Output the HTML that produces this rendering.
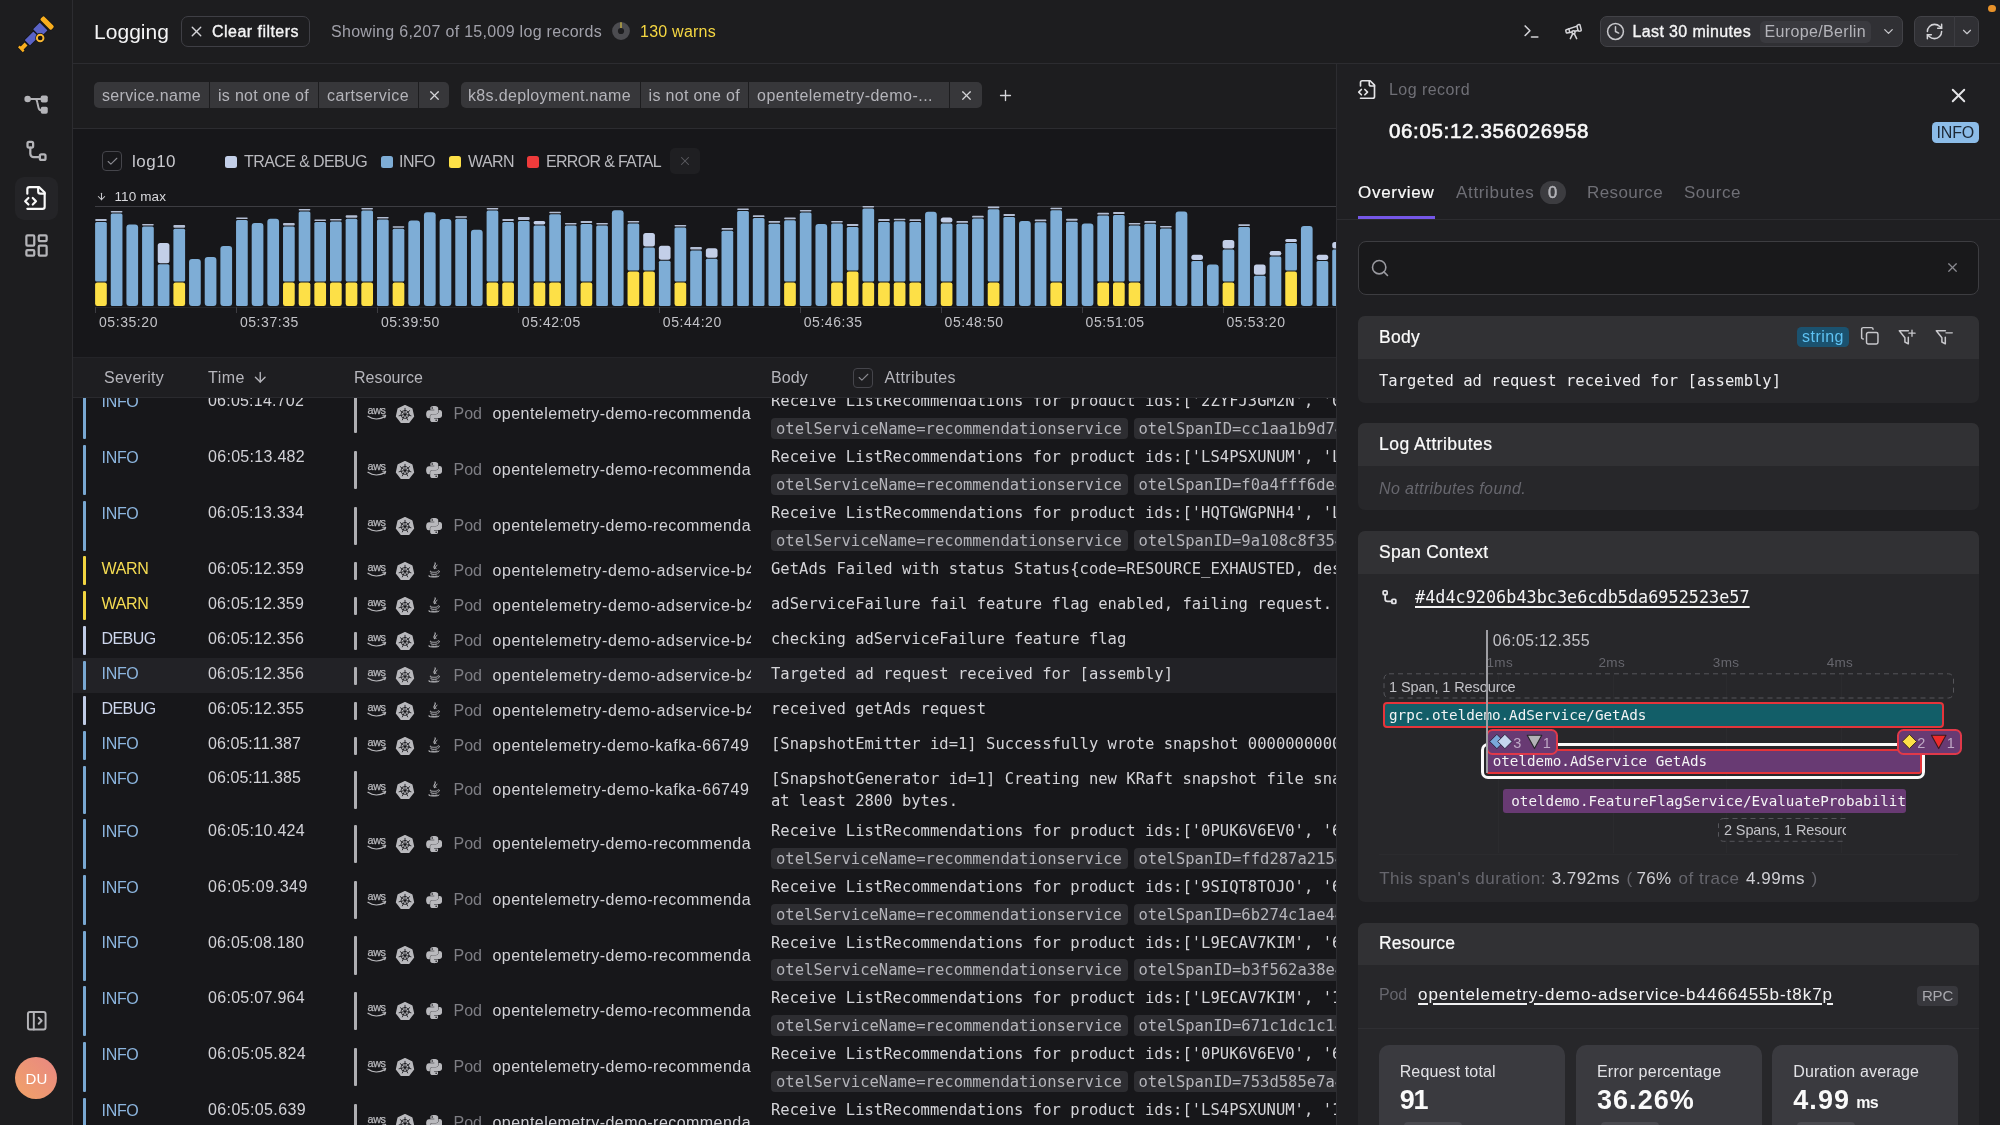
<!DOCTYPE html><html lang="en"><head><meta charset="utf-8"><title>Logging</title><style>

*{box-sizing:border-box;margin:0;padding:0}
html,body{width:2000px;height:1125px;overflow:hidden;background:#17171a}
body{font-family:"Liberation Sans",sans-serif;position:relative;-webkit-font-smoothing:antialiased}
#app{position:absolute;left:0;top:0;width:2000px;height:1125px;overflow:hidden;will-change:transform}
.b{position:absolute;display:block}
.t{position:absolute;white-space:pre}
.clip{position:absolute;overflow:hidden}

</style></head><body><div id="app">
<div class="b" style="left:72.0px;top:0.0px;width:1928.0px;height:64.0px;background:#1d1d1f;border-bottom:1px solid #2c2c30;"></div>
<div class="b" style="left:72.0px;top:64.0px;width:1264.0px;height:64.5px;background:#1d1d1f;border-bottom:1px solid #2c2c30;"></div>
<div class="b" style="left:0.0px;top:0.0px;width:73.0px;height:1125.0px;background:#1d1d1f;border-right:1px solid #2c2c30;"></div>
<svg class="b" style="left:0;top:0" width="72" height="62" viewBox="0 0 72 62"><g transform="translate(40.400 29.750) rotate(-45)" stroke="#131316" stroke-width="1.300" paint-order="stroke" stroke-linejoin="round"><rect x="6.900" y="-7.700" width="5.200" height="15.400" rx="1.600" fill="#f9ae1e"/><rect x="-4.800" y="-5.500" width="9.400" height="11" rx=".6" fill="#5a63c6"/><rect x="-18.500" y="-3.750" width="12.300" height="7.500" rx=".6" fill="#5a63c6"/><path d="M-28.300 -3.400h2.500v1.400h5.600v4h-5.600v1.400h-2.500z" fill="#f9ae1e"/></g><circle cx="40.200" cy="38" r="4.900" fill="#131316"/><circle cx="40.200" cy="38" r="3.300" fill="#1a1410" stroke="#f7b733" stroke-width="1.900"/></svg>
<svg class="b" style="left:21.5px;top:88.6px" width="30" height="30" viewBox="0 0 24 24" stroke="#b4b4b8" stroke-width="1.6" stroke-linecap="round" stroke-linejoin="round" fill="none"><circle cx="4.500" cy="8" r="2.600" fill="#b4b4b8" stroke="none"/><rect x="15" y="5.200" width="5.600" height="5.600" rx="1.400" fill="#b4b4b8" stroke="none"/><rect x="15" y="14.200" width="5.600" height="5.600" rx="1.400" fill="#b4b4b8" stroke="none"/><path d="M7 8h8"/><path d="M10.500 8c1 0 1.400 1 1.700 2.500l.9 4c.3 1.500 1 2.500 2 2.500"/></svg>
<svg class="b" style="left:22.5px;top:137.5px" width="27" height="27" viewBox="0 0 24 24" stroke="#b4b4b8" stroke-width="2" stroke-linecap="round" stroke-linejoin="round" fill="none"><rect x="4" y="3.500" width="5" height="5" rx="1.300"/><path d="M6.500 8.500v5.500a3 3 0 0 0 3 3h5.500"/><rect x="15" y="14.500" width="5" height="5" rx="1.300"/></svg>
<div class="b" style="left:15.0px;top:177.0px;width:43.0px;height:43.0px;background:#242427;border-radius:9px;"></div>
<svg class="b" style="left:23.0px;top:185.0px" width="26" height="26" viewBox="0 0 24 24" stroke="#fafafa" stroke-width="2" stroke-linecap="round" stroke-linejoin="round" fill="none"><path d="M4 22h14a2 2 0 0 0 2-2V7l-5-5H6a2 2 0 0 0-2 2v4"/><path d="M14 2v4a2 2 0 0 0 2 2h4"/><path d="m5 12-3 3 3 3"/><path d="m9 18 3-3-3-3"/></svg>
<svg class="b" style="left:22.5px;top:231.5px" width="27" height="27" viewBox="0 0 24 24" stroke="#b4b4b8" stroke-width="2" stroke-linecap="round" stroke-linejoin="round" fill="none"><rect width="7" height="9" x="3" y="3" rx="1"/><rect width="7" height="5" x="14" y="3" rx="1"/><rect width="7" height="9" x="14" y="12" rx="1"/><rect width="7" height="5" x="3" y="16" rx="1"/></svg>
<svg class="b" style="left:24.5px;top:1009.0px" width="23.5" height="23.5" viewBox="0 0 24 24" stroke="#b4b4b8" stroke-width="2" stroke-linecap="round" stroke-linejoin="round" fill="none"><rect width="18" height="18" x="3" y="3" rx="2"/><path d="M9 3v18"/><path d="m14 9 3 3-3 3"/></svg>
<div class="b" style="left:15.0px;top:1057.0px;width:42.0px;height:42.0px;border-radius:50%;background:linear-gradient(45deg,#f0a06a 10%,#e98a80 90%);"></div>
<div class="t " style="left:25.5px;top:1068.0px;font-size:15.00px;line-height:21px;color:#fff;letter-spacing:0.167px;">DU</div>
<div class="t " style="left:94.0px;top:16.5px;font-size:21.00px;line-height:29px;color:#f4f4f5;letter-spacing:0.037px;">Logging</div>
<div class="b" style="left:181.0px;top:16.0px;width:129.0px;height:31.0px;border:1px solid #3f3f45;border-radius:7px;"></div>
<svg class="b" style="left:187.5px;top:23.0px" width="17" height="17" viewBox="0 0 24 24" stroke="#d4d4d8" stroke-width="1.9" stroke-linecap="round" stroke-linejoin="round" fill="none"><path d="M18 6 6 18"/><path d="m6 6 12 12"/></svg>
<div class="t " style="left:212.0px;top:20.5px;font-size:16.00px;line-height:22px;color:#f4f4f5;letter-spacing:0.469px;-webkit-text-stroke:0.35px #f4f4f5;">Clear filters</div>
<div class="t " style="left:331.0px;top:20.5px;font-size:16.00px;line-height:22px;color:#a1a1aa;letter-spacing:0.296px;">Showing 6,207 of 15,009 log records</div>
<svg class="b" style="left:611px;top:21px" width="20" height="20" viewBox="0 0 20 20"><circle cx="10" cy="10" r="6" fill="none" stroke="#4c4c50" stroke-width="5.800"/><path d="M10 1.200v5.800" fill="none" stroke="#d8c040" stroke-width="1.200"/></svg>
<div class="t " style="left:640.0px;top:20.5px;font-size:16.00px;line-height:22px;color:#f5d742;letter-spacing:0.242px;">130 warns</div>
<svg class="b" style="left:1522.0px;top:22.0px" width="19" height="19" viewBox="0 0 24 24" stroke="#d4d4d8" stroke-width="2" stroke-linecap="round" stroke-linejoin="round" fill="none"><polyline points="4 17 10 11 4 5"/><line x1="12" x2="20" y1="19" y2="19"/></svg>
<svg class="b" style="left:1564.0px;top:22.0px" width="19" height="19" viewBox="0 0 24 24" stroke="#d4d4d8" stroke-width="1.9" stroke-linecap="round" stroke-linejoin="round" fill="none"><path d="m10.065 12.493-6.180 1.318a.934.934 0 0 1-1.108-.702l-.537-2.150a1.070 1.070 0 0 1 .691-1.265l13.504-4.440"/><path d="m13.560 11.747 4.332-.924"/><path d="m16 21-3.105-6.210"/><path d="M16.485 5.940a2 2 0 0 1 1.455-2.425l1.090-.272a1 1 0 0 1 1.212.727l1.515 6.060a1 1 0 0 1-.727 1.213l-1.090.272a2 2 0 0 1-2.425-1.455z"/><path d="m6.158 8.633 1.114 4.456"/><path d="m8 21 3.105-6.210"/><circle cx="12" cy="13" r="2"/></svg>
<div class="b" style="left:1600.0px;top:15.5px;width:303.0px;height:31.0px;background:#303034;border:1px solid #424247;border-radius:7px;"></div>
<svg class="b" style="left:1605.5px;top:22.0px" width="19" height="19" viewBox="0 0 24 24" stroke="#c8c8cc" stroke-width="1.9" stroke-linecap="round" stroke-linejoin="round" fill="none"><circle cx="12" cy="12" r="10"/><polyline points="12 6 12 12 16 14"/></svg>
<div class="t " style="left:1632.5px;top:20.5px;font-size:16.00px;line-height:22px;color:#f4f4f5;letter-spacing:0.370px;-webkit-text-stroke:0.35px #f4f4f5;">Last 30 minutes</div>
<div class="b" style="left:1760.0px;top:21.0px;width:111.0px;height:22.0px;background:#3a3a3f;border-radius:5px;"></div>
<div class="t " style="left:1764.5px;top:20.5px;font-size:16.00px;line-height:22px;color:#b4b4ba;letter-spacing:0.350px;">Europe/Berlin</div>
<svg class="b" style="left:1880.5px;top:24.0px" width="15" height="15" viewBox="0 0 24 24" stroke="#c8c8cc" stroke-width="2" stroke-linecap="round" stroke-linejoin="round" fill="none"><path d="m6 9 6 6 6-6"/></svg>
<div class="b" style="left:1914.0px;top:15.5px;width:65.0px;height:31.0px;background:#303034;border:1px solid #424247;border-radius:7px;"></div>
<div class="b" style="left:1954.0px;top:16.0px;width:1.0px;height:30.0px;background:#3c3c41;"></div>
<svg class="b" style="left:1925.0px;top:22.0px" width="19" height="19" viewBox="0 0 24 24" stroke="#d4d4d8" stroke-width="1.9" stroke-linecap="round" stroke-linejoin="round" fill="none"><path d="M3 12a9 9 0 0 1 9-9 9.750 9.750 0 0 1 6.740 2.740L21 8"/><path d="M21 3v5h-5"/><path d="M21 12a9 9 0 0 1-9 9 9.750 9.750 0 0 1-6.740-2.740L3 16"/><path d="M8 16H3v5"/></svg>
<svg class="b" style="left:1959.5px;top:24.5px" width="14" height="14" viewBox="0 0 24 24" stroke="#c8c8cc" stroke-width="2" stroke-linecap="round" stroke-linejoin="round" fill="none"><path d="m6 9 6 6 6-6"/></svg>
<div class="b" style="left:1988.0px;top:4.5px;width:7.5px;height:7.5px;background:#e8922a;border-radius:50%;"></div>
<div class="b" style="left:94.0px;top:82.0px;width:355.0px;height:26.0px;background:#37373a;border-radius:5px;"></div>
<div class="b" style="left:208.5px;top:82.0px;width:1.5px;height:26.0px;background:#1d1d1f;"></div>
<div class="b" style="left:317.5px;top:82.0px;width:1.5px;height:26.0px;background:#1d1d1f;"></div>
<div class="b" style="left:417.5px;top:82.0px;width:1.5px;height:26.0px;background:#1d1d1f;"></div>
<div class="t " style="left:102.0px;top:84.5px;font-size:16.00px;line-height:22px;color:#b4b4ba;letter-spacing:0.321px;">service.name</div>
<div class="t " style="left:218.0px;top:84.5px;font-size:16.00px;line-height:22px;color:#b4b4ba;letter-spacing:0.294px;">is not one of</div>
<div class="t " style="left:327.0px;top:84.5px;font-size:16.00px;line-height:22px;color:#b4b4ba;letter-spacing:0.423px;">cartservice</div>
<svg class="b" style="left:426.5px;top:88.0px" width="15" height="15" viewBox="0 0 24 24" stroke="#d4d4d8" stroke-width="2" stroke-linecap="round" stroke-linejoin="round" fill="none"><path d="M18 6 6 18"/><path d="m6 6 12 12"/></svg>
<div class="b" style="left:460.5px;top:82.0px;width:521.0px;height:26.0px;background:#37373a;border-radius:5px;"></div>
<div class="b" style="left:639.5px;top:82.0px;width:1.5px;height:26.0px;background:#1d1d1f;"></div>
<div class="b" style="left:747.5px;top:82.0px;width:1.5px;height:26.0px;background:#1d1d1f;"></div>
<div class="b" style="left:948.5px;top:82.0px;width:1.5px;height:26.0px;background:#1d1d1f;"></div>
<div class="t " style="left:468.0px;top:84.5px;font-size:16.00px;line-height:22px;color:#b4b4ba;letter-spacing:0.340px;">k8s.deployment.name</div>
<div class="t " style="left:648.5px;top:84.5px;font-size:16.00px;line-height:22px;color:#b4b4ba;letter-spacing:0.333px;">is not one of</div>
<div class="t " style="left:757.0px;top:84.5px;font-size:16.00px;line-height:22px;color:#b4b4ba;letter-spacing:0.481px;">opentelemetry-demo-...</div>
<svg class="b" style="left:958.5px;top:88.0px" width="15" height="15" viewBox="0 0 24 24" stroke="#d4d4d8" stroke-width="2" stroke-linecap="round" stroke-linejoin="round" fill="none"><path d="M18 6 6 18"/><path d="m6 6 12 12"/></svg>
<svg class="b" style="left:997.0px;top:87.0px" width="17" height="17" viewBox="0 0 24 24" stroke="#d4d4d8" stroke-width="1.9" stroke-linecap="round" stroke-linejoin="round" fill="none"><path d="M5 12h14"/><path d="M12 5v14"/></svg>
<div class="b" style="left:102.0px;top:151.0px;width:20.0px;height:20.0px;border:1px solid #45454b;border-radius:4px;"></div>
<svg class="b" style="left:105.5px;top:154.5px" width="13" height="13" viewBox="0 0 24 24" stroke="#8a8a90" stroke-width="2" stroke-linecap="round" stroke-linejoin="round" fill="none"><path d="M20 6 9 17l-5-5"/></svg>
<div class="t " style="left:132.0px;top:149.5px;font-size:17.00px;line-height:23px;color:#c9c9ce;letter-spacing:0.481px;">log10</div>
<div class="b" style="left:225.0px;top:155.5px;width:12.0px;height:12.0px;background:#c3cfe8;border-radius:2.5px;"></div>
<div class="t " style="left:244.0px;top:150.5px;font-size:16.00px;line-height:22px;color:#b9b9be;letter-spacing:-0.591px;">TRACE &amp; DEBUG</div>
<div class="b" style="left:381.0px;top:155.5px;width:12.0px;height:12.0px;background:#7eadd6;border-radius:2.5px;"></div>
<div class="t " style="left:399.0px;top:150.5px;font-size:16.00px;line-height:22px;color:#b9b9be;letter-spacing:-0.555px;">INFO</div>
<div class="b" style="left:449.0px;top:155.5px;width:12.0px;height:12.0px;background:#fde047;border-radius:2.5px;"></div>
<div class="t " style="left:468.0px;top:150.5px;font-size:16.00px;line-height:22px;color:#b9b9be;letter-spacing:-0.572px;">WARN</div>
<div class="b" style="left:527.0px;top:155.5px;width:12.0px;height:12.0px;background:#ee3b3b;border-radius:2.5px;"></div>
<div class="t " style="left:546.0px;top:150.5px;font-size:16.00px;line-height:22px;color:#b9b9be;letter-spacing:-0.683px;">ERROR &amp; FATAL</div>
<div class="b" style="left:670.0px;top:148.0px;width:30.0px;height:26.0px;background:#1f1f22;border-radius:5px;"></div>
<svg class="b" style="left:678.0px;top:154.0px" width="14" height="14" viewBox="0 0 24 24" stroke="#5c5c62" stroke-width="1.8" stroke-linecap="round" stroke-linejoin="round" fill="none"><path d="M18 6 6 18"/><path d="m6 6 12 12"/></svg>
<svg class="b" style="left:95.5px;top:191.0px" width="11" height="11" viewBox="0 0 24 24" stroke="#c9c9ce" stroke-width="2.2" stroke-linecap="round" stroke-linejoin="round" fill="none"><path d="M12 5v14"/><path d="m19 12-7 7-7-7"/></svg>
<div class="t " style="left:114.5px;top:187.8px;font-size:13.50px;line-height:18px;color:#d8d8dc;letter-spacing:0.103px;">110 max</div>
<div class="b" style="left:95.0px;top:205.5px;width:1241.0px;height:1.3px;background:#3d3d42;"></div>
<svg class="b" style="left:0;top:0" width="1336" height="320" viewBox="0 0 1336 320" shape-rendering="geometricPrecision"><rect x="95.10" y="282.40" width="11.700" height="23.60" rx="2.20" fill="#fde047"/><rect x="95.10" y="219.00" width="11.700" height="2.10" rx="1.00" fill="#b3bed4"/><rect x="95.10" y="222.10" width="11.700" height="59.30" rx="1.50" fill="#7eadd6"/><rect x="110.76" y="211.00" width="11.700" height="1.50" rx="0.75" fill="#b3bed4"/><rect x="110.76" y="213.50" width="11.700" height="92.50" rx="1.50" fill="#7eadd6"/><rect x="126.42" y="224.60" width="11.700" height="81.40" rx="3.00" fill="#7eadd6"/><rect x="142.08" y="224.10" width="11.700" height="1.50" rx="0.75" fill="#b3bed4"/><rect x="142.08" y="226.60" width="11.700" height="79.40" rx="1.50" fill="#7eadd6"/><rect x="157.74" y="243.00" width="11.700" height="20.20" rx="2.50" fill="#c3cfe8"/><rect x="157.74" y="264.20" width="11.700" height="41.80" rx="1.50" fill="#7eadd6"/><rect x="173.40" y="282.40" width="11.700" height="23.60" rx="2.20" fill="#fde047"/><rect x="173.40" y="224.90" width="11.700" height="2.90" rx="1.00" fill="#b3bed4"/><rect x="173.40" y="228.80" width="11.700" height="52.60" rx="1.50" fill="#7eadd6"/><rect x="189.06" y="259.00" width="11.700" height="47.00" rx="3.00" fill="#7eadd6"/><rect x="204.72" y="256.90" width="11.700" height="49.10" rx="3.00" fill="#7eadd6"/><rect x="220.38" y="245.90" width="11.700" height="60.10" rx="3.00" fill="#7eadd6"/><rect x="236.04" y="217.40" width="11.700" height="1.50" rx="0.75" fill="#b3bed4"/><rect x="236.04" y="219.90" width="11.700" height="86.10" rx="1.50" fill="#7eadd6"/><rect x="251.70" y="223.00" width="11.700" height="83.00" rx="3.00" fill="#7eadd6"/><rect x="267.36" y="218.70" width="11.700" height="87.30" rx="3.00" fill="#7eadd6"/><rect x="283.02" y="282.40" width="11.700" height="23.60" rx="2.20" fill="#fde047"/><rect x="283.02" y="223.00" width="11.700" height="2.50" rx="1.00" fill="#b3bed4"/><rect x="283.02" y="226.50" width="11.700" height="54.90" rx="1.50" fill="#7eadd6"/><rect x="298.68" y="282.40" width="11.700" height="23.60" rx="2.20" fill="#fde047"/><rect x="298.68" y="209.10" width="11.700" height="1.50" rx="0.75" fill="#b3bed4"/><rect x="298.68" y="211.60" width="11.700" height="69.80" rx="1.50" fill="#7eadd6"/><rect x="314.34" y="282.40" width="11.700" height="23.60" rx="2.20" fill="#fde047"/><rect x="314.34" y="219.50" width="11.700" height="1.50" rx="0.75" fill="#b3bed4"/><rect x="314.34" y="222.00" width="11.700" height="59.40" rx="1.50" fill="#7eadd6"/><rect x="330.00" y="282.40" width="11.700" height="23.60" rx="2.20" fill="#fde047"/><rect x="330.00" y="219.00" width="11.700" height="1.50" rx="0.75" fill="#b3bed4"/><rect x="330.00" y="221.50" width="11.700" height="59.90" rx="1.50" fill="#7eadd6"/><rect x="345.66" y="282.40" width="11.700" height="23.60" rx="2.20" fill="#fde047"/><rect x="345.66" y="215.30" width="11.700" height="2.50" rx="1.00" fill="#b3bed4"/><rect x="345.66" y="218.80" width="11.700" height="62.60" rx="1.50" fill="#7eadd6"/><rect x="361.32" y="282.40" width="11.700" height="23.60" rx="2.20" fill="#fde047"/><rect x="361.32" y="208.10" width="11.700" height="1.50" rx="0.75" fill="#b3bed4"/><rect x="361.32" y="210.60" width="11.700" height="70.80" rx="1.50" fill="#7eadd6"/><rect x="376.98" y="217.10" width="11.700" height="1.50" rx="0.75" fill="#b3bed4"/><rect x="376.98" y="219.60" width="11.700" height="86.40" rx="1.50" fill="#7eadd6"/><rect x="392.64" y="282.40" width="11.700" height="23.60" rx="2.20" fill="#fde047"/><rect x="392.64" y="226.20" width="11.700" height="1.50" rx="0.75" fill="#b3bed4"/><rect x="392.64" y="228.70" width="11.700" height="52.70" rx="1.50" fill="#7eadd6"/><rect x="408.30" y="220.60" width="11.700" height="85.40" rx="3.00" fill="#7eadd6"/><rect x="423.96" y="212.30" width="11.700" height="93.70" rx="3.00" fill="#7eadd6"/><rect x="439.62" y="219.00" width="11.700" height="87.00" rx="3.00" fill="#7eadd6"/><rect x="455.28" y="216.30" width="11.700" height="1.50" rx="0.75" fill="#b3bed4"/><rect x="455.28" y="218.80" width="11.700" height="87.20" rx="1.50" fill="#7eadd6"/><rect x="470.94" y="229.70" width="11.700" height="76.30" rx="3.00" fill="#7eadd6"/><rect x="486.60" y="282.40" width="11.700" height="23.60" rx="2.20" fill="#fde047"/><rect x="486.60" y="208.10" width="11.700" height="1.50" rx="0.75" fill="#b3bed4"/><rect x="486.60" y="210.60" width="11.700" height="70.80" rx="1.50" fill="#7eadd6"/><rect x="502.26" y="282.40" width="11.700" height="23.60" rx="2.20" fill="#fde047"/><rect x="502.26" y="219.00" width="11.700" height="2.00" rx="1.00" fill="#b3bed4"/><rect x="502.26" y="222.00" width="11.700" height="59.40" rx="1.50" fill="#7eadd6"/><rect x="517.92" y="217.00" width="11.700" height="3.00" rx="1.00" fill="#b3bed4"/><rect x="517.92" y="221.00" width="11.700" height="85.00" rx="1.50" fill="#7eadd6"/><rect x="533.58" y="282.40" width="11.700" height="23.60" rx="2.20" fill="#fde047"/><rect x="533.58" y="221.00" width="11.700" height="3.50" rx="1.75" fill="#c3cfe8"/><rect x="533.58" y="225.50" width="11.700" height="55.90" rx="1.50" fill="#7eadd6"/><rect x="549.24" y="282.40" width="11.700" height="23.60" rx="2.20" fill="#fde047"/><rect x="549.24" y="211.80" width="11.700" height="1.50" rx="0.75" fill="#b3bed4"/><rect x="549.24" y="214.30" width="11.700" height="67.10" rx="1.50" fill="#7eadd6"/><rect x="564.90" y="223.00" width="11.700" height="1.50" rx="0.75" fill="#b3bed4"/><rect x="564.90" y="225.50" width="11.700" height="80.50" rx="1.50" fill="#7eadd6"/><rect x="580.56" y="282.40" width="11.700" height="23.60" rx="2.20" fill="#fde047"/><rect x="580.56" y="221.00" width="11.700" height="2.00" rx="1.00" fill="#b3bed4"/><rect x="580.56" y="224.00" width="11.700" height="57.40" rx="1.50" fill="#7eadd6"/><rect x="596.22" y="223.00" width="11.700" height="1.50" rx="0.75" fill="#b3bed4"/><rect x="596.22" y="225.50" width="11.700" height="80.50" rx="1.50" fill="#7eadd6"/><rect x="611.88" y="210.20" width="11.700" height="95.80" rx="3.00" fill="#7eadd6"/><rect x="627.54" y="271.40" width="11.700" height="34.60" rx="2.20" fill="#fde047"/><rect x="627.54" y="221.00" width="11.700" height="1.50" rx="0.75" fill="#b3bed4"/><rect x="627.54" y="223.50" width="11.700" height="46.90" rx="1.50" fill="#7eadd6"/><rect x="643.20" y="271.40" width="11.700" height="34.60" rx="2.20" fill="#fde047"/><rect x="643.20" y="233.00" width="11.700" height="13.50" rx="2.50" fill="#c3cfe8"/><rect x="643.20" y="247.50" width="11.700" height="22.90" rx="1.50" fill="#7eadd6"/><rect x="658.86" y="245.70" width="11.700" height="14.10" rx="2.50" fill="#c3cfe8"/><rect x="658.86" y="260.80" width="11.700" height="45.20" rx="1.50" fill="#7eadd6"/><rect x="674.52" y="282.40" width="11.700" height="23.60" rx="2.20" fill="#fde047"/><rect x="674.52" y="225.00" width="11.700" height="1.50" rx="0.75" fill="#b3bed4"/><rect x="674.52" y="227.50" width="11.700" height="53.90" rx="1.50" fill="#7eadd6"/><rect x="690.18" y="247.00" width="11.700" height="2.50" rx="1.00" fill="#b3bed4"/><rect x="690.18" y="250.50" width="11.700" height="55.50" rx="1.50" fill="#7eadd6"/><rect x="705.84" y="248.30" width="11.700" height="9.50" rx="2.50" fill="#c3cfe8"/><rect x="705.84" y="258.80" width="11.700" height="47.20" rx="1.50" fill="#7eadd6"/><rect x="721.50" y="228.00" width="11.700" height="1.80" rx="0.90" fill="#b3bed4"/><rect x="721.50" y="230.80" width="11.700" height="75.20" rx="1.50" fill="#7eadd6"/><rect x="737.16" y="208.60" width="11.700" height="1.50" rx="0.75" fill="#b3bed4"/><rect x="737.16" y="211.10" width="11.700" height="94.90" rx="1.50" fill="#7eadd6"/><rect x="752.82" y="215.30" width="11.700" height="1.70" rx="0.85" fill="#b3bed4"/><rect x="752.82" y="218.00" width="11.700" height="88.00" rx="1.50" fill="#7eadd6"/><rect x="768.48" y="221.00" width="11.700" height="1.70" rx="0.85" fill="#b3bed4"/><rect x="768.48" y="223.70" width="11.700" height="82.30" rx="1.50" fill="#7eadd6"/><rect x="784.14" y="282.40" width="11.700" height="23.60" rx="2.20" fill="#fde047"/><rect x="784.14" y="217.40" width="11.700" height="1.80" rx="0.90" fill="#b3bed4"/><rect x="784.14" y="220.20" width="11.700" height="61.20" rx="1.50" fill="#7eadd6"/><rect x="799.80" y="210.00" width="11.700" height="1.60" rx="0.80" fill="#b3bed4"/><rect x="799.80" y="212.60" width="11.700" height="93.40" rx="1.50" fill="#7eadd6"/><rect x="815.46" y="224.00" width="11.700" height="82.00" rx="3.00" fill="#7eadd6"/><rect x="831.12" y="282.40" width="11.700" height="23.60" rx="2.20" fill="#fde047"/><rect x="831.12" y="221.00" width="11.700" height="1.60" rx="0.80" fill="#b3bed4"/><rect x="831.12" y="223.60" width="11.700" height="57.80" rx="1.50" fill="#7eadd6"/><rect x="846.78" y="271.40" width="11.700" height="34.60" rx="2.20" fill="#fde047"/><rect x="846.78" y="224.00" width="11.700" height="2.00" rx="1.00" fill="#b3bed4"/><rect x="846.78" y="227.00" width="11.700" height="43.40" rx="1.50" fill="#7eadd6"/><rect x="862.44" y="282.40" width="11.700" height="23.60" rx="2.20" fill="#fde047"/><rect x="862.44" y="206.00" width="11.700" height="1.60" rx="0.80" fill="#b3bed4"/><rect x="862.44" y="208.60" width="11.700" height="72.80" rx="1.50" fill="#7eadd6"/><rect x="878.10" y="282.40" width="11.700" height="23.60" rx="2.20" fill="#fde047"/><rect x="878.10" y="219.00" width="11.700" height="2.00" rx="1.00" fill="#b3bed4"/><rect x="878.10" y="222.00" width="11.700" height="59.40" rx="1.50" fill="#7eadd6"/><rect x="893.76" y="282.40" width="11.700" height="23.60" rx="2.20" fill="#fde047"/><rect x="893.76" y="218.70" width="11.700" height="1.60" rx="0.80" fill="#b3bed4"/><rect x="893.76" y="221.30" width="11.700" height="60.10" rx="1.50" fill="#7eadd6"/><rect x="909.42" y="282.40" width="11.700" height="23.60" rx="2.20" fill="#fde047"/><rect x="909.42" y="219.30" width="11.700" height="1.70" rx="0.85" fill="#b3bed4"/><rect x="909.42" y="222.00" width="11.700" height="59.40" rx="1.50" fill="#7eadd6"/><rect x="925.08" y="211.80" width="11.700" height="94.20" rx="3.00" fill="#7eadd6"/><rect x="940.74" y="282.40" width="11.700" height="23.60" rx="2.20" fill="#fde047"/><rect x="940.74" y="217.40" width="11.700" height="5.20" rx="2.50" fill="#c3cfe8"/><rect x="940.74" y="223.60" width="11.700" height="57.80" rx="1.50" fill="#7eadd6"/><rect x="956.40" y="221.00" width="11.700" height="1.80" rx="0.90" fill="#b3bed4"/><rect x="956.40" y="223.80" width="11.700" height="82.20" rx="1.50" fill="#7eadd6"/><rect x="972.06" y="215.80" width="11.700" height="1.70" rx="0.85" fill="#b3bed4"/><rect x="972.06" y="218.50" width="11.700" height="87.50" rx="1.50" fill="#7eadd6"/><rect x="987.72" y="282.40" width="11.700" height="23.60" rx="2.20" fill="#fde047"/><rect x="987.72" y="206.50" width="11.700" height="1.70" rx="0.85" fill="#b3bed4"/><rect x="987.72" y="209.20" width="11.700" height="72.20" rx="1.50" fill="#7eadd6"/><rect x="1003.38" y="214.10" width="11.700" height="1.90" rx="0.95" fill="#b3bed4"/><rect x="1003.38" y="217.00" width="11.700" height="89.00" rx="1.50" fill="#7eadd6"/><rect x="1019.04" y="221.00" width="11.700" height="85.00" rx="3.00" fill="#7eadd6"/><rect x="1034.70" y="219.60" width="11.700" height="1.60" rx="0.80" fill="#b3bed4"/><rect x="1034.70" y="222.20" width="11.700" height="83.80" rx="1.50" fill="#7eadd6"/><rect x="1050.36" y="282.40" width="11.700" height="23.60" rx="2.20" fill="#fde047"/><rect x="1050.36" y="207.70" width="11.700" height="1.60" rx="0.80" fill="#b3bed4"/><rect x="1050.36" y="210.30" width="11.700" height="71.10" rx="1.50" fill="#7eadd6"/><rect x="1066.02" y="218.80" width="11.700" height="2.00" rx="1.00" fill="#b3bed4"/><rect x="1066.02" y="221.80" width="11.700" height="84.20" rx="1.50" fill="#7eadd6"/><rect x="1081.68" y="223.60" width="11.700" height="82.40" rx="3.00" fill="#7eadd6"/><rect x="1097.34" y="282.40" width="11.700" height="23.60" rx="2.20" fill="#fde047"/><rect x="1097.34" y="212.80" width="11.700" height="1.80" rx="0.90" fill="#b3bed4"/><rect x="1097.34" y="215.60" width="11.700" height="65.80" rx="1.50" fill="#7eadd6"/><rect x="1113.00" y="282.40" width="11.700" height="23.60" rx="2.20" fill="#fde047"/><rect x="1113.00" y="212.00" width="11.700" height="2.00" rx="1.00" fill="#b3bed4"/><rect x="1113.00" y="215.00" width="11.700" height="66.40" rx="1.50" fill="#7eadd6"/><rect x="1128.66" y="282.40" width="11.700" height="23.60" rx="2.20" fill="#fde047"/><rect x="1128.66" y="223.00" width="11.700" height="1.60" rx="0.80" fill="#b3bed4"/><rect x="1128.66" y="225.60" width="11.700" height="55.80" rx="1.50" fill="#7eadd6"/><rect x="1144.32" y="221.00" width="11.700" height="1.80" rx="0.90" fill="#b3bed4"/><rect x="1144.32" y="223.80" width="11.700" height="82.20" rx="1.50" fill="#7eadd6"/><rect x="1159.98" y="226.00" width="11.700" height="1.50" rx="0.75" fill="#b3bed4"/><rect x="1159.98" y="228.50" width="11.700" height="77.50" rx="1.50" fill="#7eadd6"/><rect x="1175.64" y="211.50" width="11.700" height="94.50" rx="3.00" fill="#7eadd6"/><rect x="1191.30" y="254.80" width="11.700" height="5.20" rx="2.50" fill="#c3cfe8"/><rect x="1191.30" y="261.00" width="11.700" height="45.00" rx="1.50" fill="#7eadd6"/><rect x="1206.96" y="264.40" width="11.700" height="41.60" rx="3.00" fill="#7eadd6"/><rect x="1222.62" y="282.40" width="11.700" height="23.60" rx="2.20" fill="#fde047"/><rect x="1222.62" y="240.00" width="11.700" height="8.60" rx="2.50" fill="#c3cfe8"/><rect x="1222.62" y="249.60" width="11.700" height="31.80" rx="1.50" fill="#7eadd6"/><rect x="1238.28" y="224.20" width="11.700" height="1.80" rx="0.90" fill="#b3bed4"/><rect x="1238.28" y="227.00" width="11.700" height="79.00" rx="1.50" fill="#7eadd6"/><rect x="1253.94" y="264.40" width="11.700" height="10.40" rx="2.50" fill="#c3cfe8"/><rect x="1253.94" y="275.80" width="11.700" height="30.20" rx="1.50" fill="#7eadd6"/><rect x="1269.60" y="251.00" width="11.700" height="4.50" rx="2.25" fill="#c3cfe8"/><rect x="1269.60" y="256.50" width="11.700" height="49.50" rx="1.50" fill="#7eadd6"/><rect x="1285.26" y="271.40" width="11.700" height="34.60" rx="2.20" fill="#fde047"/><rect x="1285.26" y="238.90" width="11.700" height="3.10" rx="1.55" fill="#c3cfe8"/><rect x="1285.26" y="243.00" width="11.700" height="27.40" rx="1.50" fill="#7eadd6"/><rect x="1300.92" y="226.00" width="11.700" height="80.00" rx="3.00" fill="#7eadd6"/><rect x="1316.58" y="254.80" width="11.700" height="5.20" rx="2.50" fill="#c3cfe8"/><rect x="1316.58" y="261.00" width="11.700" height="45.00" rx="1.50" fill="#7eadd6"/><rect x="1332.24" y="242.00" width="11.700" height="6.60" rx="2.50" fill="#c3cfe8"/><rect x="1332.24" y="249.60" width="11.700" height="56.40" rx="1.50" fill="#7eadd6"/></svg>
<div class="b" style="left:95.0px;top:306.6px;width:1241.0px;height:1.2px;background:#27272b;"></div>
<div class="b" style="left:95.0px;top:307.0px;width:1.0px;height:6.0px;background:#3d3d42;"></div>
<div class="t " style="left:99.0px;top:313.0px;font-size:14.00px;line-height:19px;color:#c2c2c7;letter-spacing:0.563px;">05:35:20</div>
<div class="b" style="left:235.9px;top:307.0px;width:1.0px;height:6.0px;background:#3d3d42;"></div>
<div class="t " style="left:239.9px;top:313.0px;font-size:14.00px;line-height:19px;color:#c2c2c7;letter-spacing:0.563px;">05:37:35</div>
<div class="b" style="left:376.9px;top:307.0px;width:1.0px;height:6.0px;background:#3d3d42;"></div>
<div class="t " style="left:380.9px;top:313.0px;font-size:14.00px;line-height:19px;color:#c2c2c7;letter-spacing:0.563px;">05:39:50</div>
<div class="b" style="left:517.8px;top:307.0px;width:1.0px;height:6.0px;background:#3d3d42;"></div>
<div class="t " style="left:521.8px;top:313.0px;font-size:14.00px;line-height:19px;color:#c2c2c7;letter-spacing:0.563px;">05:42:05</div>
<div class="b" style="left:658.8px;top:307.0px;width:1.0px;height:6.0px;background:#3d3d42;"></div>
<div class="t " style="left:662.8px;top:313.0px;font-size:14.00px;line-height:19px;color:#c2c2c7;letter-spacing:0.563px;">05:44:20</div>
<div class="b" style="left:799.7px;top:307.0px;width:1.0px;height:6.0px;background:#3d3d42;"></div>
<div class="t " style="left:803.7px;top:313.0px;font-size:14.00px;line-height:19px;color:#c2c2c7;letter-spacing:0.563px;">05:46:35</div>
<div class="b" style="left:940.6px;top:307.0px;width:1.0px;height:6.0px;background:#3d3d42;"></div>
<div class="t " style="left:944.6px;top:313.0px;font-size:14.00px;line-height:19px;color:#c2c2c7;letter-spacing:0.563px;">05:48:50</div>
<div class="b" style="left:1081.6px;top:307.0px;width:1.0px;height:6.0px;background:#3d3d42;"></div>
<div class="t " style="left:1085.6px;top:313.0px;font-size:14.00px;line-height:19px;color:#c2c2c7;letter-spacing:0.563px;">05:51:05</div>
<div class="b" style="left:1222.5px;top:307.0px;width:1.0px;height:6.0px;background:#3d3d42;"></div>
<div class="t " style="left:1226.5px;top:313.0px;font-size:14.00px;line-height:19px;color:#c2c2c7;letter-spacing:0.563px;">05:53:20</div>
<div class="clip" style="left:73px;top:397px;width:1263px;height:728px">
<div class="b" style="left:10.0px;top:-8.0px;width:3.1px;height:50.0px;background:#79a8d2;border-radius:1px;"></div>
<div class="t " style="left:28.5px;top:-6.4px;font-size:16.00px;line-height:22px;color:#8cb5de;letter-spacing:-0.305px;">INFO</div>
<div class="t " style="left:135.0px;top:-6.8px;font-size:16.00px;line-height:22px;color:#d2d2d7;letter-spacing:0.215px;">06:05:14.702</div>
<div class="b" style="left:281.0px;top:-2.2px;width:3.0px;height:38.5px;background:#aeaeb2;border-radius:1px;"></div>
<svg class="b" style="left:293.5px;top:10.0px" width="20" height="14" viewBox="0 0 20 14"><text x="9.600" y="7.200" text-anchor="middle" font-family="Liberation Sans, sans-serif" font-size="10.800" font-weight="400" fill="#b9b9bd" letter-spacing="-0.35" stroke="#b9b9bd" stroke-width="0.25">aws</text><path d="M1 9.300c4.800 3.300 11.500 3.300 16.800 0.300" stroke="#b9b9bd" stroke-width="1.300" fill="none" stroke-linecap="round"/><path d="M15.800 8.300l2.900-.1-1 2.600" stroke="#b9b9bd" stroke-width="1.100" fill="none" stroke-linecap="round" stroke-linejoin="round"/></svg>
<svg class="b" style="left:322.4px;top:6.9px" width="20" height="20" viewBox="0 0 20 20"><polygon points="10.00,1.80 16.72,5.04 18.38,12.31 13.73,18.15 6.27,18.15 1.62,12.31 3.28,5.04" fill="#b9b9bd" stroke="#b9b9bd" stroke-width="1.600" stroke-linejoin="round"/><g stroke="#17171a" stroke-width="0.850" fill="none" stroke-linecap="round"><circle cx="10" cy="10.400" r="4.000"/><path d="M10.00 9.20L10.00 4.30"/><path d="M10.94 9.65L14.77 6.60"/><path d="M11.17 10.67L15.95 11.76"/><path d="M10.52 11.48L12.65 15.90"/><path d="M9.48 11.48L7.35 15.90"/><path d="M8.83 10.67L4.05 11.76"/><path d="M9.06 9.65L5.23 6.60"/></g><circle cx="10" cy="10.400" r="1.100" fill="#17171a"/></svg>
<svg class="b" style="left:352.6px;top:8.8px" width="16.400" height="16.400" viewBox="0 0 16 16.200"><path d="M7.990.020C7.350.020 6.700.080 6.150.180 4.500.470 4.200 1.080 4.200 2.200V3.680H8.100V4.170H2.750C1.620 4.170.630 4.850.320 6.140-.040 7.620-.050 8.550.320 10.100.600 11.250 1.260 12.070 2.390 12.070H3.720V10.300C3.720 9.010 4.830 7.880 6.150 7.880H10.030C11.110 7.880 11.970 6.990 11.970 5.910V2.200C11.970 1.150 11.080.360 10.030.180 9.360.070 8.670.020 7.990.020Z" fill="#b9b9bd"/><path d="M7.990.020C7.350.020 6.700.080 6.150.180 4.500.470 4.200 1.080 4.200 2.200V3.680H8.100V4.170H2.750C1.620 4.170.630 4.850.320 6.140-.040 7.620-.050 8.550.320 10.100.600 11.250 1.260 12.070 2.390 12.070H3.720V10.300C3.720 9.010 4.830 7.880 6.150 7.880H10.030C11.110 7.880 11.970 6.990 11.970 5.910V2.200C11.970 1.150 11.080.360 10.030.180 9.360.070 8.670.020 7.990.020Z" fill="#b9b9bd" transform="rotate(180 8 8.050)"/><circle cx="6.050" cy="2.050" r=".78" fill="#17171a"/><circle cx="9.950" cy="14.050" r=".78" fill="#17171a"/></svg>
<div class="t " style="left:380.5px;top:6.0px;font-size:16.00px;line-height:22px;color:#7e7e84;letter-spacing:0.010px;">Pod</div>
<div class="clip" style="left:407px;top:5.0px;width:271px;height:24px">
<div class="t " style="left:12.5px;top:1.0px;font-size:16.00px;line-height:22px;color:#d2d2d7;letter-spacing:0.450px;">opentelemetry-demo-recommenda</div>
</div>
<div class="t " style="left:698.0px;top:-5.9px;font-size:15.50px;line-height:21px;color:#d4d4d8;font-family:'DejaVu Sans Mono','Liberation Mono',monospace;letter-spacing:0.018px;">Receive ListRecommendations for product ids:[&#x27;2ZYFJ3GM2N&#x27;, &#x27;0</div>
<div class="b" style="left:698.0px;top:20.5px;width:357.0px;height:21.5px;background:#2d2d31;border-radius:4px;"></div>
<div class="t " style="left:703.0px;top:21.6px;font-size:15.50px;line-height:21px;color:#b4b4ba;font-family:'DejaVu Sans Mono','Liberation Mono',monospace;letter-spacing:0.018px;">otelServiceName=recommendationservice</div>
<div class="b" style="left:1060.5px;top:20.5px;width:230.0px;height:21.5px;background:#2d2d31;border-radius:4px;"></div>
<div class="t " style="left:1065.5px;top:21.6px;font-size:15.50px;line-height:21px;color:#b4b4ba;font-family:'DejaVu Sans Mono','Liberation Mono',monospace;letter-spacing:0.018px;">otelSpanID=cc1aa1b9d74c</div>
<div class="b" style="left:10.0px;top:48.0px;width:3.1px;height:50.0px;background:#79a8d2;border-radius:1px;"></div>
<div class="t " style="left:28.5px;top:49.6px;font-size:16.00px;line-height:22px;color:#8cb5de;letter-spacing:-0.305px;">INFO</div>
<div class="t " style="left:135.0px;top:49.2px;font-size:16.00px;line-height:22px;color:#d2d2d7;letter-spacing:0.298px;">06:05:13.482</div>
<div class="b" style="left:281.0px;top:53.8px;width:3.0px;height:38.5px;background:#aeaeb2;border-radius:1px;"></div>
<svg class="b" style="left:293.5px;top:66.0px" width="20" height="14" viewBox="0 0 20 14"><text x="9.600" y="7.200" text-anchor="middle" font-family="Liberation Sans, sans-serif" font-size="10.800" font-weight="400" fill="#b9b9bd" letter-spacing="-0.35" stroke="#b9b9bd" stroke-width="0.25">aws</text><path d="M1 9.300c4.800 3.300 11.500 3.300 16.800 0.300" stroke="#b9b9bd" stroke-width="1.300" fill="none" stroke-linecap="round"/><path d="M15.800 8.300l2.900-.1-1 2.600" stroke="#b9b9bd" stroke-width="1.100" fill="none" stroke-linecap="round" stroke-linejoin="round"/></svg>
<svg class="b" style="left:322.4px;top:62.9px" width="20" height="20" viewBox="0 0 20 20"><polygon points="10.00,1.80 16.72,5.04 18.38,12.31 13.73,18.15 6.27,18.15 1.62,12.31 3.28,5.04" fill="#b9b9bd" stroke="#b9b9bd" stroke-width="1.600" stroke-linejoin="round"/><g stroke="#17171a" stroke-width="0.850" fill="none" stroke-linecap="round"><circle cx="10" cy="10.400" r="4.000"/><path d="M10.00 9.20L10.00 4.30"/><path d="M10.94 9.65L14.77 6.60"/><path d="M11.17 10.67L15.95 11.76"/><path d="M10.52 11.48L12.65 15.90"/><path d="M9.48 11.48L7.35 15.90"/><path d="M8.83 10.67L4.05 11.76"/><path d="M9.06 9.65L5.23 6.60"/></g><circle cx="10" cy="10.400" r="1.100" fill="#17171a"/></svg>
<svg class="b" style="left:352.6px;top:64.8px" width="16.400" height="16.400" viewBox="0 0 16 16.200"><path d="M7.990.020C7.350.020 6.700.080 6.150.180 4.500.470 4.200 1.080 4.200 2.200V3.680H8.100V4.170H2.750C1.620 4.170.630 4.850.320 6.140-.040 7.620-.050 8.550.320 10.100.600 11.250 1.260 12.070 2.390 12.070H3.720V10.300C3.720 9.010 4.830 7.880 6.150 7.880H10.030C11.110 7.880 11.970 6.990 11.970 5.910V2.200C11.970 1.150 11.080.360 10.030.180 9.360.070 8.670.020 7.990.020Z" fill="#b9b9bd"/><path d="M7.990.020C7.350.020 6.700.080 6.150.180 4.500.470 4.200 1.080 4.200 2.200V3.680H8.100V4.170H2.750C1.620 4.170.630 4.850.320 6.140-.040 7.620-.050 8.550.320 10.100.600 11.250 1.260 12.070 2.390 12.070H3.720V10.300C3.720 9.010 4.830 7.880 6.150 7.880H10.030C11.110 7.880 11.970 6.990 11.970 5.910V2.200C11.970 1.150 11.080.360 10.030.180 9.360.070 8.670.020 7.990.020Z" fill="#b9b9bd" transform="rotate(180 8 8.050)"/><circle cx="6.050" cy="2.050" r=".78" fill="#17171a"/><circle cx="9.950" cy="14.050" r=".78" fill="#17171a"/></svg>
<div class="t " style="left:380.5px;top:62.0px;font-size:16.00px;line-height:22px;color:#7e7e84;letter-spacing:0.010px;">Pod</div>
<div class="clip" style="left:407px;top:61.0px;width:271px;height:24px">
<div class="t " style="left:12.5px;top:1.0px;font-size:16.00px;line-height:22px;color:#d2d2d7;letter-spacing:0.450px;">opentelemetry-demo-recommenda</div>
</div>
<div class="t " style="left:698.0px;top:50.1px;font-size:15.50px;line-height:21px;color:#d4d4d8;font-family:'DejaVu Sans Mono','Liberation Mono',monospace;letter-spacing:0.018px;">Receive ListRecommendations for product ids:[&#x27;LS4PSXUNUM&#x27;, &#x27;L</div>
<div class="b" style="left:698.0px;top:76.5px;width:357.0px;height:21.5px;background:#2d2d31;border-radius:4px;"></div>
<div class="t " style="left:703.0px;top:77.6px;font-size:15.50px;line-height:21px;color:#b4b4ba;font-family:'DejaVu Sans Mono','Liberation Mono',monospace;letter-spacing:0.018px;">otelServiceName=recommendationservice</div>
<div class="b" style="left:1060.5px;top:76.5px;width:230.0px;height:21.5px;background:#2d2d31;border-radius:4px;"></div>
<div class="t " style="left:1065.5px;top:77.6px;font-size:15.50px;line-height:21px;color:#b4b4ba;font-family:'DejaVu Sans Mono','Liberation Mono',monospace;letter-spacing:0.018px;">otelSpanID=f0a4fff6de4c</div>
<div class="b" style="left:10.0px;top:104.0px;width:3.1px;height:50.0px;background:#79a8d2;border-radius:1px;"></div>
<div class="t " style="left:28.5px;top:105.6px;font-size:16.00px;line-height:22px;color:#8cb5de;letter-spacing:-0.305px;">INFO</div>
<div class="t " style="left:135.0px;top:105.2px;font-size:16.00px;line-height:22px;color:#d2d2d7;letter-spacing:0.215px;">06:05:13.334</div>
<div class="b" style="left:281.0px;top:109.8px;width:3.0px;height:38.5px;background:#aeaeb2;border-radius:1px;"></div>
<svg class="b" style="left:293.5px;top:122.0px" width="20" height="14" viewBox="0 0 20 14"><text x="9.600" y="7.200" text-anchor="middle" font-family="Liberation Sans, sans-serif" font-size="10.800" font-weight="400" fill="#b9b9bd" letter-spacing="-0.35" stroke="#b9b9bd" stroke-width="0.25">aws</text><path d="M1 9.300c4.800 3.300 11.500 3.300 16.800 0.300" stroke="#b9b9bd" stroke-width="1.300" fill="none" stroke-linecap="round"/><path d="M15.800 8.300l2.900-.1-1 2.600" stroke="#b9b9bd" stroke-width="1.100" fill="none" stroke-linecap="round" stroke-linejoin="round"/></svg>
<svg class="b" style="left:322.4px;top:118.9px" width="20" height="20" viewBox="0 0 20 20"><polygon points="10.00,1.80 16.72,5.04 18.38,12.31 13.73,18.15 6.27,18.15 1.62,12.31 3.28,5.04" fill="#b9b9bd" stroke="#b9b9bd" stroke-width="1.600" stroke-linejoin="round"/><g stroke="#17171a" stroke-width="0.850" fill="none" stroke-linecap="round"><circle cx="10" cy="10.400" r="4.000"/><path d="M10.00 9.20L10.00 4.30"/><path d="M10.94 9.65L14.77 6.60"/><path d="M11.17 10.67L15.95 11.76"/><path d="M10.52 11.48L12.65 15.90"/><path d="M9.48 11.48L7.35 15.90"/><path d="M8.83 10.67L4.05 11.76"/><path d="M9.06 9.65L5.23 6.60"/></g><circle cx="10" cy="10.400" r="1.100" fill="#17171a"/></svg>
<svg class="b" style="left:352.6px;top:120.8px" width="16.400" height="16.400" viewBox="0 0 16 16.200"><path d="M7.990.020C7.350.020 6.700.080 6.150.180 4.500.470 4.200 1.080 4.200 2.200V3.680H8.100V4.170H2.750C1.620 4.170.630 4.850.320 6.140-.040 7.620-.050 8.550.320 10.100.600 11.250 1.260 12.070 2.390 12.070H3.720V10.300C3.720 9.010 4.830 7.880 6.150 7.880H10.030C11.110 7.880 11.970 6.990 11.970 5.910V2.200C11.970 1.150 11.080.360 10.030.180 9.360.070 8.670.020 7.990.020Z" fill="#b9b9bd"/><path d="M7.990.020C7.350.020 6.700.080 6.150.180 4.500.470 4.200 1.080 4.200 2.200V3.680H8.100V4.170H2.750C1.620 4.170.630 4.850.320 6.140-.040 7.620-.050 8.550.320 10.100.600 11.250 1.260 12.070 2.390 12.070H3.720V10.300C3.720 9.010 4.830 7.880 6.150 7.880H10.030C11.110 7.880 11.970 6.990 11.970 5.910V2.200C11.970 1.150 11.080.360 10.030.180 9.360.070 8.670.020 7.990.020Z" fill="#b9b9bd" transform="rotate(180 8 8.050)"/><circle cx="6.050" cy="2.050" r=".78" fill="#17171a"/><circle cx="9.950" cy="14.050" r=".78" fill="#17171a"/></svg>
<div class="t " style="left:380.5px;top:118.0px;font-size:16.00px;line-height:22px;color:#7e7e84;letter-spacing:0.010px;">Pod</div>
<div class="clip" style="left:407px;top:117.0px;width:271px;height:24px">
<div class="t " style="left:12.5px;top:1.0px;font-size:16.00px;line-height:22px;color:#d2d2d7;letter-spacing:0.450px;">opentelemetry-demo-recommenda</div>
</div>
<div class="t " style="left:698.0px;top:106.1px;font-size:15.50px;line-height:21px;color:#d4d4d8;font-family:'DejaVu Sans Mono','Liberation Mono',monospace;letter-spacing:0.018px;">Receive ListRecommendations for product ids:[&#x27;HQTGWGPNH4&#x27;, &#x27;L</div>
<div class="b" style="left:698.0px;top:132.5px;width:357.0px;height:21.5px;background:#2d2d31;border-radius:4px;"></div>
<div class="t " style="left:703.0px;top:133.6px;font-size:15.50px;line-height:21px;color:#b4b4ba;font-family:'DejaVu Sans Mono','Liberation Mono',monospace;letter-spacing:0.018px;">otelServiceName=recommendationservice</div>
<div class="b" style="left:1060.5px;top:132.5px;width:230.0px;height:21.5px;background:#2d2d31;border-radius:4px;"></div>
<div class="t " style="left:1065.5px;top:133.6px;font-size:15.50px;line-height:21px;color:#b4b4ba;font-family:'DejaVu Sans Mono','Liberation Mono',monospace;letter-spacing:0.018px;">otelSpanID=9a108c8f354c</div>
<div class="b" style="left:10.0px;top:159.0px;width:3.1px;height:28.5px;background:#f1d440;border-radius:1px;"></div>
<div class="t " style="left:28.5px;top:160.6px;font-size:16.00px;line-height:22px;color:#f5dc52;letter-spacing:-0.322px;">WARN</div>
<div class="t " style="left:135.0px;top:160.7px;font-size:16.00px;line-height:22px;color:#d2d2d7;letter-spacing:0.215px;">06:05:12.359</div>
<div class="b" style="left:281.0px;top:164.6px;width:3.0px;height:18.5px;background:#aeaeb2;border-radius:1px;"></div>
<svg class="b" style="left:293.5px;top:166.9px" width="20" height="14" viewBox="0 0 20 14"><text x="9.600" y="7.200" text-anchor="middle" font-family="Liberation Sans, sans-serif" font-size="10.800" font-weight="400" fill="#b9b9bd" letter-spacing="-0.35" stroke="#b9b9bd" stroke-width="0.25">aws</text><path d="M1 9.300c4.800 3.300 11.500 3.300 16.800 0.300" stroke="#b9b9bd" stroke-width="1.300" fill="none" stroke-linecap="round"/><path d="M15.800 8.300l2.900-.1-1 2.600" stroke="#b9b9bd" stroke-width="1.100" fill="none" stroke-linecap="round" stroke-linejoin="round"/></svg>
<svg class="b" style="left:322.4px;top:163.7px" width="20" height="20" viewBox="0 0 20 20"><polygon points="10.00,1.80 16.72,5.04 18.38,12.31 13.73,18.15 6.27,18.15 1.62,12.31 3.28,5.04" fill="#b9b9bd" stroke="#b9b9bd" stroke-width="1.600" stroke-linejoin="round"/><g stroke="#17171a" stroke-width="0.850" fill="none" stroke-linecap="round"><circle cx="10" cy="10.400" r="4.000"/><path d="M10.00 9.20L10.00 4.30"/><path d="M10.94 9.65L14.77 6.60"/><path d="M11.17 10.67L15.95 11.76"/><path d="M10.52 11.48L12.65 15.90"/><path d="M9.48 11.48L7.35 15.90"/><path d="M8.83 10.67L4.05 11.76"/><path d="M9.06 9.65L5.23 6.60"/></g><circle cx="10" cy="10.400" r="1.100" fill="#17171a"/></svg>
<svg class="b" style="left:353.8px;top:165.1px" width="14" height="17" viewBox="0 0 15 18" fill="none" stroke="#b9b9bd" stroke-linecap="round"><path d="M8.600.800c1.800 2-2.900 3.200-.6 6.100" stroke-width="1.200"/><path d="M10.800 3.400c-2 1.200-2.300 2.200-1.200 3.700" stroke-width="1"/><path d="M3.800 9.600c-2.200.7 1.300 1.300 4.100 1.300 2 0 3.600-.3 3.600-.6" stroke-width="1.050"/><path d="M4.300 11.900c-1.500.6.800 1.200 3.500 1.200 1.500 0 2.700-.2 3.200-.5" stroke-width="1.050"/><path d="M12 9.300c1.500-.3 2.300.9.300 2.300" stroke-width="1"/><path d="M2.200 14.500c-2 .6.900 1.500 5.400 1.500 3.400 0 5.800-.6 5.600-1.200" stroke-width="1.050"/><path d="M5 15.100c1.800.4 4.200.3 5.800-.1" stroke-width="1"/></svg>
<div class="t " style="left:380.5px;top:162.9px;font-size:16.00px;line-height:22px;color:#7e7e84;letter-spacing:0.010px;">Pod</div>
<div class="clip" style="left:407px;top:161.9px;width:271px;height:24px">
<div class="t " style="left:12.5px;top:1.0px;font-size:16.00px;line-height:22px;color:#d2d2d7;letter-spacing:0.623px;">opentelemetry-demo-adservice-b4</div>
</div>
<div class="t " style="left:698.0px;top:161.6px;font-size:15.50px;line-height:21px;color:#d4d4d8;font-family:'DejaVu Sans Mono','Liberation Mono',monospace;letter-spacing:0.018px;">GetAds Failed with status Status{code=RESOURCE_EXHAUSTED, des</div>
<div class="b" style="left:10.0px;top:194.0px;width:3.1px;height:28.5px;background:#f1d440;border-radius:1px;"></div>
<div class="t " style="left:28.5px;top:195.6px;font-size:16.00px;line-height:22px;color:#f5dc52;letter-spacing:-0.322px;">WARN</div>
<div class="t " style="left:135.0px;top:195.7px;font-size:16.00px;line-height:22px;color:#d2d2d7;letter-spacing:0.215px;">06:05:12.359</div>
<div class="b" style="left:281.0px;top:199.6px;width:3.0px;height:18.5px;background:#aeaeb2;border-radius:1px;"></div>
<svg class="b" style="left:293.5px;top:201.9px" width="20" height="14" viewBox="0 0 20 14"><text x="9.600" y="7.200" text-anchor="middle" font-family="Liberation Sans, sans-serif" font-size="10.800" font-weight="400" fill="#b9b9bd" letter-spacing="-0.35" stroke="#b9b9bd" stroke-width="0.25">aws</text><path d="M1 9.300c4.800 3.300 11.500 3.300 16.800 0.300" stroke="#b9b9bd" stroke-width="1.300" fill="none" stroke-linecap="round"/><path d="M15.800 8.300l2.900-.1-1 2.600" stroke="#b9b9bd" stroke-width="1.100" fill="none" stroke-linecap="round" stroke-linejoin="round"/></svg>
<svg class="b" style="left:322.4px;top:198.7px" width="20" height="20" viewBox="0 0 20 20"><polygon points="10.00,1.80 16.72,5.04 18.38,12.31 13.73,18.15 6.27,18.15 1.62,12.31 3.28,5.04" fill="#b9b9bd" stroke="#b9b9bd" stroke-width="1.600" stroke-linejoin="round"/><g stroke="#17171a" stroke-width="0.850" fill="none" stroke-linecap="round"><circle cx="10" cy="10.400" r="4.000"/><path d="M10.00 9.20L10.00 4.30"/><path d="M10.94 9.65L14.77 6.60"/><path d="M11.17 10.67L15.95 11.76"/><path d="M10.52 11.48L12.65 15.90"/><path d="M9.48 11.48L7.35 15.90"/><path d="M8.83 10.67L4.05 11.76"/><path d="M9.06 9.65L5.23 6.60"/></g><circle cx="10" cy="10.400" r="1.100" fill="#17171a"/></svg>
<svg class="b" style="left:353.8px;top:200.1px" width="14" height="17" viewBox="0 0 15 18" fill="none" stroke="#b9b9bd" stroke-linecap="round"><path d="M8.600.800c1.800 2-2.900 3.200-.6 6.100" stroke-width="1.200"/><path d="M10.800 3.400c-2 1.200-2.300 2.200-1.200 3.700" stroke-width="1"/><path d="M3.800 9.600c-2.200.7 1.300 1.300 4.100 1.300 2 0 3.600-.3 3.600-.6" stroke-width="1.050"/><path d="M4.300 11.900c-1.500.6.800 1.200 3.500 1.200 1.500 0 2.700-.2 3.200-.5" stroke-width="1.050"/><path d="M12 9.300c1.500-.3 2.300.9.300 2.300" stroke-width="1"/><path d="M2.200 14.500c-2 .6.900 1.500 5.400 1.500 3.400 0 5.800-.6 5.600-1.200" stroke-width="1.050"/><path d="M5 15.100c1.800.4 4.200.3 5.800-.1" stroke-width="1"/></svg>
<div class="t " style="left:380.5px;top:197.9px;font-size:16.00px;line-height:22px;color:#7e7e84;letter-spacing:0.010px;">Pod</div>
<div class="clip" style="left:407px;top:196.9px;width:271px;height:24px">
<div class="t " style="left:12.5px;top:1.0px;font-size:16.00px;line-height:22px;color:#d2d2d7;letter-spacing:0.623px;">opentelemetry-demo-adservice-b4</div>
</div>
<div class="t " style="left:698.0px;top:196.6px;font-size:15.50px;line-height:21px;color:#d4d4d8;font-family:'DejaVu Sans Mono','Liberation Mono',monospace;letter-spacing:0.018px;">adServiceFailure fail feature flag enabled, failing request.</div>
<div class="b" style="left:10.0px;top:229.0px;width:3.1px;height:28.5px;background:#c0cce6;border-radius:1px;"></div>
<div class="t " style="left:28.5px;top:230.6px;font-size:16.00px;line-height:22px;color:#cdd6ec;letter-spacing:-0.580px;">DEBUG</div>
<div class="t " style="left:135.0px;top:230.7px;font-size:16.00px;line-height:22px;color:#d2d2d7;letter-spacing:0.215px;">06:05:12.356</div>
<div class="b" style="left:281.0px;top:234.6px;width:3.0px;height:18.5px;background:#aeaeb2;border-radius:1px;"></div>
<svg class="b" style="left:293.5px;top:236.9px" width="20" height="14" viewBox="0 0 20 14"><text x="9.600" y="7.200" text-anchor="middle" font-family="Liberation Sans, sans-serif" font-size="10.800" font-weight="400" fill="#b9b9bd" letter-spacing="-0.35" stroke="#b9b9bd" stroke-width="0.25">aws</text><path d="M1 9.300c4.800 3.300 11.500 3.300 16.800 0.300" stroke="#b9b9bd" stroke-width="1.300" fill="none" stroke-linecap="round"/><path d="M15.800 8.300l2.900-.1-1 2.600" stroke="#b9b9bd" stroke-width="1.100" fill="none" stroke-linecap="round" stroke-linejoin="round"/></svg>
<svg class="b" style="left:322.4px;top:233.7px" width="20" height="20" viewBox="0 0 20 20"><polygon points="10.00,1.80 16.72,5.04 18.38,12.31 13.73,18.15 6.27,18.15 1.62,12.31 3.28,5.04" fill="#b9b9bd" stroke="#b9b9bd" stroke-width="1.600" stroke-linejoin="round"/><g stroke="#17171a" stroke-width="0.850" fill="none" stroke-linecap="round"><circle cx="10" cy="10.400" r="4.000"/><path d="M10.00 9.20L10.00 4.30"/><path d="M10.94 9.65L14.77 6.60"/><path d="M11.17 10.67L15.95 11.76"/><path d="M10.52 11.48L12.65 15.90"/><path d="M9.48 11.48L7.35 15.90"/><path d="M8.83 10.67L4.05 11.76"/><path d="M9.06 9.65L5.23 6.60"/></g><circle cx="10" cy="10.400" r="1.100" fill="#17171a"/></svg>
<svg class="b" style="left:353.8px;top:235.1px" width="14" height="17" viewBox="0 0 15 18" fill="none" stroke="#b9b9bd" stroke-linecap="round"><path d="M8.600.800c1.800 2-2.900 3.200-.6 6.100" stroke-width="1.200"/><path d="M10.800 3.400c-2 1.200-2.300 2.200-1.200 3.700" stroke-width="1"/><path d="M3.800 9.600c-2.200.7 1.300 1.300 4.100 1.300 2 0 3.600-.3 3.600-.6" stroke-width="1.050"/><path d="M4.300 11.900c-1.500.6.800 1.200 3.500 1.200 1.500 0 2.700-.2 3.200-.5" stroke-width="1.050"/><path d="M12 9.300c1.500-.3 2.300.9.300 2.300" stroke-width="1"/><path d="M2.200 14.500c-2 .6.900 1.500 5.400 1.500 3.400 0 5.800-.6 5.600-1.200" stroke-width="1.050"/><path d="M5 15.100c1.800.4 4.200.3 5.800-.1" stroke-width="1"/></svg>
<div class="t " style="left:380.5px;top:232.9px;font-size:16.00px;line-height:22px;color:#7e7e84;letter-spacing:0.010px;">Pod</div>
<div class="clip" style="left:407px;top:231.9px;width:271px;height:24px">
<div class="t " style="left:12.5px;top:1.0px;font-size:16.00px;line-height:22px;color:#d2d2d7;letter-spacing:0.623px;">opentelemetry-demo-adservice-b4</div>
</div>
<div class="t " style="left:698.0px;top:231.6px;font-size:15.50px;line-height:21px;color:#d4d4d8;font-family:'DejaVu Sans Mono','Liberation Mono',monospace;letter-spacing:0.018px;">checking adServiceFailure feature flag</div>
<div class="b" style="left:0.0px;top:260.5px;width:1263.0px;height:35.0px;background:#222226;"></div>
<div class="b" style="left:10.0px;top:264.0px;width:3.1px;height:28.5px;background:#79a8d2;border-radius:1px;"></div>
<div class="t " style="left:28.5px;top:265.6px;font-size:16.00px;line-height:22px;color:#8cb5de;letter-spacing:-0.305px;">INFO</div>
<div class="t " style="left:135.0px;top:265.7px;font-size:16.00px;line-height:22px;color:#d2d2d7;letter-spacing:0.215px;">06:05:12.356</div>
<div class="b" style="left:281.0px;top:269.6px;width:3.0px;height:18.5px;background:#aeaeb2;border-radius:1px;"></div>
<svg class="b" style="left:293.5px;top:271.9px" width="20" height="14" viewBox="0 0 20 14"><text x="9.600" y="7.200" text-anchor="middle" font-family="Liberation Sans, sans-serif" font-size="10.800" font-weight="400" fill="#b9b9bd" letter-spacing="-0.35" stroke="#b9b9bd" stroke-width="0.25">aws</text><path d="M1 9.300c4.800 3.300 11.500 3.300 16.800 0.300" stroke="#b9b9bd" stroke-width="1.300" fill="none" stroke-linecap="round"/><path d="M15.800 8.300l2.900-.1-1 2.600" stroke="#b9b9bd" stroke-width="1.100" fill="none" stroke-linecap="round" stroke-linejoin="round"/></svg>
<svg class="b" style="left:322.4px;top:268.8px" width="20" height="20" viewBox="0 0 20 20"><polygon points="10.00,1.80 16.72,5.04 18.38,12.31 13.73,18.15 6.27,18.15 1.62,12.31 3.28,5.04" fill="#b9b9bd" stroke="#b9b9bd" stroke-width="1.600" stroke-linejoin="round"/><g stroke="#222226" stroke-width="0.850" fill="none" stroke-linecap="round"><circle cx="10" cy="10.400" r="4.000"/><path d="M10.00 9.20L10.00 4.30"/><path d="M10.94 9.65L14.77 6.60"/><path d="M11.17 10.67L15.95 11.76"/><path d="M10.52 11.48L12.65 15.90"/><path d="M9.48 11.48L7.35 15.90"/><path d="M8.83 10.67L4.05 11.76"/><path d="M9.06 9.65L5.23 6.60"/></g><circle cx="10" cy="10.400" r="1.100" fill="#222226"/></svg>
<svg class="b" style="left:353.8px;top:270.1px" width="14" height="17" viewBox="0 0 15 18" fill="none" stroke="#b9b9bd" stroke-linecap="round"><path d="M8.600.800c1.800 2-2.900 3.200-.6 6.100" stroke-width="1.200"/><path d="M10.800 3.400c-2 1.200-2.300 2.200-1.200 3.700" stroke-width="1"/><path d="M3.800 9.600c-2.200.7 1.300 1.300 4.100 1.300 2 0 3.600-.3 3.600-.6" stroke-width="1.050"/><path d="M4.300 11.900c-1.500.6.800 1.200 3.500 1.200 1.500 0 2.700-.2 3.200-.5" stroke-width="1.050"/><path d="M12 9.300c1.500-.3 2.300.9.300 2.300" stroke-width="1"/><path d="M2.200 14.500c-2 .6.900 1.500 5.400 1.500 3.400 0 5.800-.6 5.600-1.200" stroke-width="1.050"/><path d="M5 15.100c1.800.4 4.200.3 5.800-.1" stroke-width="1"/></svg>
<div class="t " style="left:380.5px;top:267.9px;font-size:16.00px;line-height:22px;color:#7e7e84;letter-spacing:0.010px;">Pod</div>
<div class="clip" style="left:407px;top:266.9px;width:271px;height:24px">
<div class="t " style="left:12.5px;top:1.0px;font-size:16.00px;line-height:22px;color:#d2d2d7;letter-spacing:0.623px;">opentelemetry-demo-adservice-b4</div>
</div>
<div class="t " style="left:698.0px;top:266.6px;font-size:15.50px;line-height:21px;color:#d4d4d8;font-family:'DejaVu Sans Mono','Liberation Mono',monospace;letter-spacing:0.018px;">Targeted ad request received for [assembly]</div>
<div class="b" style="left:10.0px;top:299.0px;width:3.1px;height:28.5px;background:#c0cce6;border-radius:1px;"></div>
<div class="t " style="left:28.5px;top:300.6px;font-size:16.00px;line-height:22px;color:#cdd6ec;letter-spacing:-0.580px;">DEBUG</div>
<div class="t " style="left:135.0px;top:300.7px;font-size:16.00px;line-height:22px;color:#d2d2d7;letter-spacing:0.215px;">06:05:12.355</div>
<div class="b" style="left:281.0px;top:304.6px;width:3.0px;height:18.5px;background:#aeaeb2;border-radius:1px;"></div>
<svg class="b" style="left:293.5px;top:306.9px" width="20" height="14" viewBox="0 0 20 14"><text x="9.600" y="7.200" text-anchor="middle" font-family="Liberation Sans, sans-serif" font-size="10.800" font-weight="400" fill="#b9b9bd" letter-spacing="-0.35" stroke="#b9b9bd" stroke-width="0.25">aws</text><path d="M1 9.300c4.800 3.300 11.500 3.300 16.800 0.300" stroke="#b9b9bd" stroke-width="1.300" fill="none" stroke-linecap="round"/><path d="M15.800 8.300l2.900-.1-1 2.600" stroke="#b9b9bd" stroke-width="1.100" fill="none" stroke-linecap="round" stroke-linejoin="round"/></svg>
<svg class="b" style="left:322.4px;top:303.8px" width="20" height="20" viewBox="0 0 20 20"><polygon points="10.00,1.80 16.72,5.04 18.38,12.31 13.73,18.15 6.27,18.15 1.62,12.31 3.28,5.04" fill="#b9b9bd" stroke="#b9b9bd" stroke-width="1.600" stroke-linejoin="round"/><g stroke="#17171a" stroke-width="0.850" fill="none" stroke-linecap="round"><circle cx="10" cy="10.400" r="4.000"/><path d="M10.00 9.20L10.00 4.30"/><path d="M10.94 9.65L14.77 6.60"/><path d="M11.17 10.67L15.95 11.76"/><path d="M10.52 11.48L12.65 15.90"/><path d="M9.48 11.48L7.35 15.90"/><path d="M8.83 10.67L4.05 11.76"/><path d="M9.06 9.65L5.23 6.60"/></g><circle cx="10" cy="10.400" r="1.100" fill="#17171a"/></svg>
<svg class="b" style="left:353.8px;top:305.1px" width="14" height="17" viewBox="0 0 15 18" fill="none" stroke="#b9b9bd" stroke-linecap="round"><path d="M8.600.800c1.800 2-2.900 3.200-.6 6.100" stroke-width="1.200"/><path d="M10.800 3.400c-2 1.200-2.300 2.200-1.200 3.700" stroke-width="1"/><path d="M3.800 9.600c-2.200.7 1.300 1.300 4.100 1.300 2 0 3.600-.3 3.600-.6" stroke-width="1.050"/><path d="M4.300 11.900c-1.500.6.800 1.200 3.500 1.200 1.500 0 2.700-.2 3.200-.5" stroke-width="1.050"/><path d="M12 9.300c1.500-.3 2.300.9.300 2.300" stroke-width="1"/><path d="M2.200 14.500c-2 .6.900 1.500 5.400 1.500 3.400 0 5.800-.6 5.600-1.200" stroke-width="1.050"/><path d="M5 15.100c1.800.4 4.200.3 5.800-.1" stroke-width="1"/></svg>
<div class="t " style="left:380.5px;top:302.9px;font-size:16.00px;line-height:22px;color:#7e7e84;letter-spacing:0.010px;">Pod</div>
<div class="clip" style="left:407px;top:301.9px;width:271px;height:24px">
<div class="t " style="left:12.5px;top:1.0px;font-size:16.00px;line-height:22px;color:#d2d2d7;letter-spacing:0.623px;">opentelemetry-demo-adservice-b4</div>
</div>
<div class="t " style="left:698.0px;top:301.6px;font-size:15.50px;line-height:21px;color:#d4d4d8;font-family:'DejaVu Sans Mono','Liberation Mono',monospace;letter-spacing:0.018px;">received getAds request</div>
<div class="b" style="left:10.0px;top:334.0px;width:3.1px;height:28.5px;background:#79a8d2;border-radius:1px;"></div>
<div class="t " style="left:28.5px;top:335.6px;font-size:16.00px;line-height:22px;color:#8cb5de;letter-spacing:-0.305px;">INFO</div>
<div class="t " style="left:135.0px;top:335.7px;font-size:16.00px;line-height:22px;color:#d2d2d7;letter-spacing:0.064px;">06:05:11.387</div>
<div class="b" style="left:281.0px;top:339.6px;width:3.0px;height:18.5px;background:#aeaeb2;border-radius:1px;"></div>
<svg class="b" style="left:293.5px;top:341.9px" width="20" height="14" viewBox="0 0 20 14"><text x="9.600" y="7.200" text-anchor="middle" font-family="Liberation Sans, sans-serif" font-size="10.800" font-weight="400" fill="#b9b9bd" letter-spacing="-0.35" stroke="#b9b9bd" stroke-width="0.25">aws</text><path d="M1 9.300c4.800 3.300 11.500 3.300 16.800 0.300" stroke="#b9b9bd" stroke-width="1.300" fill="none" stroke-linecap="round"/><path d="M15.800 8.300l2.900-.1-1 2.600" stroke="#b9b9bd" stroke-width="1.100" fill="none" stroke-linecap="round" stroke-linejoin="round"/></svg>
<svg class="b" style="left:322.4px;top:338.8px" width="20" height="20" viewBox="0 0 20 20"><polygon points="10.00,1.80 16.72,5.04 18.38,12.31 13.73,18.15 6.27,18.15 1.62,12.31 3.28,5.04" fill="#b9b9bd" stroke="#b9b9bd" stroke-width="1.600" stroke-linejoin="round"/><g stroke="#17171a" stroke-width="0.850" fill="none" stroke-linecap="round"><circle cx="10" cy="10.400" r="4.000"/><path d="M10.00 9.20L10.00 4.30"/><path d="M10.94 9.65L14.77 6.60"/><path d="M11.17 10.67L15.95 11.76"/><path d="M10.52 11.48L12.65 15.90"/><path d="M9.48 11.48L7.35 15.90"/><path d="M8.83 10.67L4.05 11.76"/><path d="M9.06 9.65L5.23 6.60"/></g><circle cx="10" cy="10.400" r="1.100" fill="#17171a"/></svg>
<svg class="b" style="left:353.8px;top:340.1px" width="14" height="17" viewBox="0 0 15 18" fill="none" stroke="#b9b9bd" stroke-linecap="round"><path d="M8.600.800c1.800 2-2.900 3.200-.6 6.100" stroke-width="1.200"/><path d="M10.800 3.400c-2 1.200-2.300 2.200-1.200 3.700" stroke-width="1"/><path d="M3.800 9.600c-2.200.7 1.300 1.300 4.100 1.300 2 0 3.600-.3 3.600-.6" stroke-width="1.050"/><path d="M4.300 11.900c-1.500.6.800 1.200 3.500 1.200 1.500 0 2.700-.2 3.200-.5" stroke-width="1.050"/><path d="M12 9.300c1.500-.3 2.300.9.300 2.300" stroke-width="1"/><path d="M2.200 14.500c-2 .6.900 1.500 5.400 1.500 3.400 0 5.800-.6 5.600-1.200" stroke-width="1.050"/><path d="M5 15.100c1.800.4 4.200.3 5.800-.1" stroke-width="1"/></svg>
<div class="t " style="left:380.5px;top:337.9px;font-size:16.00px;line-height:22px;color:#7e7e84;letter-spacing:0.010px;">Pod</div>
<div class="clip" style="left:407px;top:336.9px;width:271px;height:24px">
<div class="t " style="left:12.5px;top:1.0px;font-size:16.00px;line-height:22px;color:#d2d2d7;letter-spacing:0.562px;">opentelemetry-demo-kafka-66749</div>
</div>
<div class="t " style="left:698.0px;top:336.6px;font-size:15.50px;line-height:21px;color:#d4d4d8;font-family:'DejaVu Sans Mono','Liberation Mono',monospace;letter-spacing:0.018px;">[SnapshotEmitter id=1] Successfully wrote snapshot 00000000000</div>
<div class="b" style="left:10.0px;top:369.0px;width:3.1px;height:47.5px;background:#79a8d2;border-radius:1px;"></div>
<div class="t " style="left:28.5px;top:370.6px;font-size:16.00px;line-height:22px;color:#8cb5de;letter-spacing:-0.305px;">INFO</div>
<div class="t " style="left:135.0px;top:370.2px;font-size:16.00px;line-height:22px;color:#d2d2d7;letter-spacing:0.064px;">06:05:11.385</div>
<div class="b" style="left:281.0px;top:373.5px;width:3.0px;height:38.5px;background:#aeaeb2;border-radius:1px;"></div>
<svg class="b" style="left:293.5px;top:385.8px" width="20" height="14" viewBox="0 0 20 14"><text x="9.600" y="7.200" text-anchor="middle" font-family="Liberation Sans, sans-serif" font-size="10.800" font-weight="400" fill="#b9b9bd" letter-spacing="-0.35" stroke="#b9b9bd" stroke-width="0.25">aws</text><path d="M1 9.300c4.800 3.300 11.500 3.300 16.800 0.300" stroke="#b9b9bd" stroke-width="1.300" fill="none" stroke-linecap="round"/><path d="M15.800 8.300l2.900-.1-1 2.600" stroke="#b9b9bd" stroke-width="1.100" fill="none" stroke-linecap="round" stroke-linejoin="round"/></svg>
<svg class="b" style="left:322.4px;top:382.6px" width="20" height="20" viewBox="0 0 20 20"><polygon points="10.00,1.80 16.72,5.04 18.38,12.31 13.73,18.15 6.27,18.15 1.62,12.31 3.28,5.04" fill="#b9b9bd" stroke="#b9b9bd" stroke-width="1.600" stroke-linejoin="round"/><g stroke="#17171a" stroke-width="0.850" fill="none" stroke-linecap="round"><circle cx="10" cy="10.400" r="4.000"/><path d="M10.00 9.20L10.00 4.30"/><path d="M10.94 9.65L14.77 6.60"/><path d="M11.17 10.67L15.95 11.76"/><path d="M10.52 11.48L12.65 15.90"/><path d="M9.48 11.48L7.35 15.90"/><path d="M8.83 10.67L4.05 11.76"/><path d="M9.06 9.65L5.23 6.60"/></g><circle cx="10" cy="10.400" r="1.100" fill="#17171a"/></svg>
<svg class="b" style="left:353.8px;top:384.0px" width="14" height="17" viewBox="0 0 15 18" fill="none" stroke="#b9b9bd" stroke-linecap="round"><path d="M8.600.800c1.800 2-2.900 3.200-.6 6.100" stroke-width="1.200"/><path d="M10.800 3.400c-2 1.200-2.300 2.200-1.200 3.700" stroke-width="1"/><path d="M3.800 9.600c-2.200.7 1.300 1.300 4.100 1.300 2 0 3.600-.3 3.600-.6" stroke-width="1.050"/><path d="M4.300 11.900c-1.500.6.800 1.200 3.500 1.200 1.500 0 2.700-.2 3.200-.5" stroke-width="1.050"/><path d="M12 9.300c1.500-.3 2.300.9.300 2.300" stroke-width="1"/><path d="M2.200 14.500c-2 .6.900 1.500 5.400 1.500 3.400 0 5.800-.6 5.600-1.200" stroke-width="1.050"/><path d="M5 15.100c1.800.4 4.200.3 5.800-.1" stroke-width="1"/></svg>
<div class="t " style="left:380.5px;top:381.8px;font-size:16.00px;line-height:22px;color:#7e7e84;letter-spacing:0.010px;">Pod</div>
<div class="clip" style="left:407px;top:380.8px;width:271px;height:24px">
<div class="t " style="left:12.5px;top:1.0px;font-size:16.00px;line-height:22px;color:#d2d2d7;letter-spacing:0.562px;">opentelemetry-demo-kafka-66749</div>
</div>
<div class="t " style="left:698.0px;top:371.6px;font-size:15.50px;line-height:21px;color:#d4d4d8;font-family:'DejaVu Sans Mono','Liberation Mono',monospace;letter-spacing:0.018px;">[SnapshotGenerator id=1] Creating new KRaft snapshot file snap</div>
<div class="t " style="left:698.0px;top:394.4px;font-size:15.50px;line-height:21px;color:#d4d4d8;font-family:'DejaVu Sans Mono','Liberation Mono',monospace;letter-spacing:0.018px;">at least 2800 bytes.</div>
<div class="b" style="left:10.0px;top:422.0px;width:3.1px;height:50.0px;background:#79a8d2;border-radius:1px;"></div>
<div class="t " style="left:28.5px;top:423.6px;font-size:16.00px;line-height:22px;color:#8cb5de;letter-spacing:-0.305px;">INFO</div>
<div class="t " style="left:135.0px;top:423.2px;font-size:16.00px;line-height:22px;color:#d2d2d7;letter-spacing:0.298px;">06:05:10.424</div>
<div class="b" style="left:281.0px;top:427.8px;width:3.0px;height:38.5px;background:#aeaeb2;border-radius:1px;"></div>
<svg class="b" style="left:293.5px;top:440.0px" width="20" height="14" viewBox="0 0 20 14"><text x="9.600" y="7.200" text-anchor="middle" font-family="Liberation Sans, sans-serif" font-size="10.800" font-weight="400" fill="#b9b9bd" letter-spacing="-0.35" stroke="#b9b9bd" stroke-width="0.25">aws</text><path d="M1 9.300c4.800 3.300 11.500 3.300 16.800 0.300" stroke="#b9b9bd" stroke-width="1.300" fill="none" stroke-linecap="round"/><path d="M15.800 8.300l2.900-.1-1 2.600" stroke="#b9b9bd" stroke-width="1.100" fill="none" stroke-linecap="round" stroke-linejoin="round"/></svg>
<svg class="b" style="left:322.4px;top:436.9px" width="20" height="20" viewBox="0 0 20 20"><polygon points="10.00,1.80 16.72,5.04 18.38,12.31 13.73,18.15 6.27,18.15 1.62,12.31 3.28,5.04" fill="#b9b9bd" stroke="#b9b9bd" stroke-width="1.600" stroke-linejoin="round"/><g stroke="#17171a" stroke-width="0.850" fill="none" stroke-linecap="round"><circle cx="10" cy="10.400" r="4.000"/><path d="M10.00 9.20L10.00 4.30"/><path d="M10.94 9.65L14.77 6.60"/><path d="M11.17 10.67L15.95 11.76"/><path d="M10.52 11.48L12.65 15.90"/><path d="M9.48 11.48L7.35 15.90"/><path d="M8.83 10.67L4.05 11.76"/><path d="M9.06 9.65L5.23 6.60"/></g><circle cx="10" cy="10.400" r="1.100" fill="#17171a"/></svg>
<svg class="b" style="left:352.6px;top:438.8px" width="16.400" height="16.400" viewBox="0 0 16 16.200"><path d="M7.990.020C7.350.020 6.700.080 6.150.180 4.500.470 4.200 1.080 4.200 2.200V3.680H8.100V4.170H2.750C1.620 4.170.630 4.850.320 6.140-.040 7.620-.050 8.550.320 10.100.600 11.250 1.260 12.070 2.390 12.070H3.720V10.300C3.720 9.010 4.830 7.880 6.150 7.880H10.030C11.110 7.880 11.970 6.990 11.970 5.910V2.200C11.970 1.150 11.080.360 10.030.180 9.360.070 8.670.020 7.990.020Z" fill="#b9b9bd"/><path d="M7.990.020C7.350.020 6.700.080 6.150.180 4.500.470 4.200 1.080 4.200 2.200V3.680H8.100V4.170H2.750C1.620 4.170.630 4.850.320 6.140-.040 7.620-.050 8.550.320 10.100.600 11.250 1.260 12.070 2.390 12.070H3.720V10.300C3.720 9.010 4.830 7.880 6.150 7.880H10.030C11.110 7.880 11.970 6.990 11.970 5.910V2.200C11.970 1.150 11.080.360 10.030.180 9.360.070 8.670.020 7.990.020Z" fill="#b9b9bd" transform="rotate(180 8 8.050)"/><circle cx="6.050" cy="2.050" r=".78" fill="#17171a"/><circle cx="9.950" cy="14.050" r=".78" fill="#17171a"/></svg>
<div class="t " style="left:380.5px;top:436.0px;font-size:16.00px;line-height:22px;color:#7e7e84;letter-spacing:0.010px;">Pod</div>
<div class="clip" style="left:407px;top:435.0px;width:271px;height:24px">
<div class="t " style="left:12.5px;top:1.0px;font-size:16.00px;line-height:22px;color:#d2d2d7;letter-spacing:0.450px;">opentelemetry-demo-recommenda</div>
</div>
<div class="t " style="left:698.0px;top:424.1px;font-size:15.50px;line-height:21px;color:#d4d4d8;font-family:'DejaVu Sans Mono','Liberation Mono',monospace;letter-spacing:0.018px;">Receive ListRecommendations for product ids:[&#x27;0PUK6V6EV0&#x27;, &#x27;6</div>
<div class="b" style="left:698.0px;top:450.5px;width:357.0px;height:21.5px;background:#2d2d31;border-radius:4px;"></div>
<div class="t " style="left:703.0px;top:451.6px;font-size:15.50px;line-height:21px;color:#b4b4ba;font-family:'DejaVu Sans Mono','Liberation Mono',monospace;letter-spacing:0.018px;">otelServiceName=recommendationservice</div>
<div class="b" style="left:1060.5px;top:450.5px;width:230.0px;height:21.5px;background:#2d2d31;border-radius:4px;"></div>
<div class="t " style="left:1065.5px;top:451.6px;font-size:15.50px;line-height:21px;color:#b4b4ba;font-family:'DejaVu Sans Mono','Liberation Mono',monospace;letter-spacing:0.018px;">otelSpanID=ffd287a2154c</div>
<div class="b" style="left:10.0px;top:478.0px;width:3.1px;height:50.0px;background:#79a8d2;border-radius:1px;"></div>
<div class="t " style="left:28.5px;top:479.6px;font-size:16.00px;line-height:22px;color:#8cb5de;letter-spacing:-0.305px;">INFO</div>
<div class="t " style="left:135.0px;top:479.2px;font-size:16.00px;line-height:22px;color:#d2d2d7;letter-spacing:0.548px;">06:05:09.349</div>
<div class="b" style="left:281.0px;top:483.8px;width:3.0px;height:38.5px;background:#aeaeb2;border-radius:1px;"></div>
<svg class="b" style="left:293.5px;top:496.0px" width="20" height="14" viewBox="0 0 20 14"><text x="9.600" y="7.200" text-anchor="middle" font-family="Liberation Sans, sans-serif" font-size="10.800" font-weight="400" fill="#b9b9bd" letter-spacing="-0.35" stroke="#b9b9bd" stroke-width="0.25">aws</text><path d="M1 9.300c4.800 3.300 11.500 3.300 16.800 0.300" stroke="#b9b9bd" stroke-width="1.300" fill="none" stroke-linecap="round"/><path d="M15.800 8.300l2.900-.1-1 2.600" stroke="#b9b9bd" stroke-width="1.100" fill="none" stroke-linecap="round" stroke-linejoin="round"/></svg>
<svg class="b" style="left:322.4px;top:492.9px" width="20" height="20" viewBox="0 0 20 20"><polygon points="10.00,1.80 16.72,5.04 18.38,12.31 13.73,18.15 6.27,18.15 1.62,12.31 3.28,5.04" fill="#b9b9bd" stroke="#b9b9bd" stroke-width="1.600" stroke-linejoin="round"/><g stroke="#17171a" stroke-width="0.850" fill="none" stroke-linecap="round"><circle cx="10" cy="10.400" r="4.000"/><path d="M10.00 9.20L10.00 4.30"/><path d="M10.94 9.65L14.77 6.60"/><path d="M11.17 10.67L15.95 11.76"/><path d="M10.52 11.48L12.65 15.90"/><path d="M9.48 11.48L7.35 15.90"/><path d="M8.83 10.67L4.05 11.76"/><path d="M9.06 9.65L5.23 6.60"/></g><circle cx="10" cy="10.400" r="1.100" fill="#17171a"/></svg>
<svg class="b" style="left:352.6px;top:494.8px" width="16.400" height="16.400" viewBox="0 0 16 16.200"><path d="M7.990.020C7.350.020 6.700.080 6.150.180 4.500.470 4.200 1.080 4.200 2.200V3.680H8.100V4.170H2.750C1.620 4.170.630 4.850.320 6.140-.040 7.620-.050 8.550.320 10.100.600 11.250 1.260 12.070 2.390 12.070H3.720V10.300C3.720 9.010 4.830 7.880 6.150 7.880H10.030C11.110 7.880 11.970 6.990 11.970 5.910V2.200C11.970 1.150 11.080.360 10.030.180 9.360.070 8.670.020 7.990.020Z" fill="#b9b9bd"/><path d="M7.990.020C7.350.020 6.700.080 6.150.180 4.500.470 4.200 1.080 4.200 2.200V3.680H8.100V4.170H2.750C1.620 4.170.630 4.850.320 6.140-.040 7.620-.050 8.550.320 10.100.600 11.250 1.260 12.070 2.390 12.070H3.720V10.300C3.720 9.010 4.830 7.880 6.150 7.880H10.030C11.110 7.880 11.970 6.990 11.970 5.910V2.200C11.970 1.150 11.080.360 10.030.180 9.360.070 8.670.020 7.990.020Z" fill="#b9b9bd" transform="rotate(180 8 8.050)"/><circle cx="6.050" cy="2.050" r=".78" fill="#17171a"/><circle cx="9.950" cy="14.050" r=".78" fill="#17171a"/></svg>
<div class="t " style="left:380.5px;top:492.0px;font-size:16.00px;line-height:22px;color:#7e7e84;letter-spacing:0.010px;">Pod</div>
<div class="clip" style="left:407px;top:491.0px;width:271px;height:24px">
<div class="t " style="left:12.5px;top:1.0px;font-size:16.00px;line-height:22px;color:#d2d2d7;letter-spacing:0.450px;">opentelemetry-demo-recommenda</div>
</div>
<div class="t " style="left:698.0px;top:480.1px;font-size:15.50px;line-height:21px;color:#d4d4d8;font-family:'DejaVu Sans Mono','Liberation Mono',monospace;letter-spacing:0.018px;">Receive ListRecommendations for product ids:[&#x27;9SIQT8TOJO&#x27;, &#x27;6</div>
<div class="b" style="left:698.0px;top:506.5px;width:357.0px;height:21.5px;background:#2d2d31;border-radius:4px;"></div>
<div class="t " style="left:703.0px;top:507.6px;font-size:15.50px;line-height:21px;color:#b4b4ba;font-family:'DejaVu Sans Mono','Liberation Mono',monospace;letter-spacing:0.018px;">otelServiceName=recommendationservice</div>
<div class="b" style="left:1060.5px;top:506.5px;width:230.0px;height:21.5px;background:#2d2d31;border-radius:4px;"></div>
<div class="t " style="left:1065.5px;top:507.6px;font-size:15.50px;line-height:21px;color:#b4b4ba;font-family:'DejaVu Sans Mono','Liberation Mono',monospace;letter-spacing:0.018px;">otelSpanID=6b274c1ae44c</div>
<div class="b" style="left:10.0px;top:533.5px;width:3.1px;height:50.0px;background:#79a8d2;border-radius:1px;"></div>
<div class="t " style="left:28.5px;top:535.1px;font-size:16.00px;line-height:22px;color:#8cb5de;letter-spacing:-0.305px;">INFO</div>
<div class="t " style="left:135.0px;top:534.7px;font-size:16.00px;line-height:22px;color:#d2d2d7;letter-spacing:0.215px;">06:05:08.180</div>
<div class="b" style="left:281.0px;top:539.2px;width:3.0px;height:38.5px;background:#aeaeb2;border-radius:1px;"></div>
<svg class="b" style="left:293.5px;top:551.5px" width="20" height="14" viewBox="0 0 20 14"><text x="9.600" y="7.200" text-anchor="middle" font-family="Liberation Sans, sans-serif" font-size="10.800" font-weight="400" fill="#b9b9bd" letter-spacing="-0.35" stroke="#b9b9bd" stroke-width="0.25">aws</text><path d="M1 9.300c4.800 3.300 11.500 3.300 16.800 0.300" stroke="#b9b9bd" stroke-width="1.300" fill="none" stroke-linecap="round"/><path d="M15.800 8.300l2.900-.1-1 2.600" stroke="#b9b9bd" stroke-width="1.100" fill="none" stroke-linecap="round" stroke-linejoin="round"/></svg>
<svg class="b" style="left:322.4px;top:548.4px" width="20" height="20" viewBox="0 0 20 20"><polygon points="10.00,1.80 16.72,5.04 18.38,12.31 13.73,18.15 6.27,18.15 1.62,12.31 3.28,5.04" fill="#b9b9bd" stroke="#b9b9bd" stroke-width="1.600" stroke-linejoin="round"/><g stroke="#17171a" stroke-width="0.850" fill="none" stroke-linecap="round"><circle cx="10" cy="10.400" r="4.000"/><path d="M10.00 9.20L10.00 4.30"/><path d="M10.94 9.65L14.77 6.60"/><path d="M11.17 10.67L15.95 11.76"/><path d="M10.52 11.48L12.65 15.90"/><path d="M9.48 11.48L7.35 15.90"/><path d="M8.83 10.67L4.05 11.76"/><path d="M9.06 9.65L5.23 6.60"/></g><circle cx="10" cy="10.400" r="1.100" fill="#17171a"/></svg>
<svg class="b" style="left:352.6px;top:550.3px" width="16.400" height="16.400" viewBox="0 0 16 16.200"><path d="M7.990.020C7.350.020 6.700.080 6.150.180 4.500.470 4.200 1.080 4.200 2.200V3.680H8.100V4.170H2.750C1.620 4.170.630 4.850.320 6.140-.040 7.620-.050 8.550.320 10.100.600 11.250 1.260 12.070 2.390 12.070H3.720V10.300C3.720 9.010 4.830 7.880 6.150 7.880H10.030C11.110 7.880 11.970 6.990 11.970 5.910V2.200C11.970 1.150 11.080.360 10.030.180 9.360.070 8.670.020 7.990.020Z" fill="#b9b9bd"/><path d="M7.990.020C7.350.020 6.700.080 6.150.180 4.500.470 4.200 1.080 4.200 2.200V3.680H8.100V4.170H2.750C1.620 4.170.630 4.850.320 6.140-.040 7.620-.050 8.550.320 10.100.600 11.250 1.260 12.070 2.390 12.070H3.720V10.300C3.720 9.010 4.830 7.880 6.150 7.880H10.030C11.110 7.880 11.970 6.990 11.970 5.910V2.200C11.970 1.150 11.080.360 10.030.180 9.360.070 8.670.020 7.990.020Z" fill="#b9b9bd" transform="rotate(180 8 8.050)"/><circle cx="6.050" cy="2.050" r=".78" fill="#17171a"/><circle cx="9.950" cy="14.050" r=".78" fill="#17171a"/></svg>
<div class="t " style="left:380.5px;top:547.5px;font-size:16.00px;line-height:22px;color:#7e7e84;letter-spacing:0.010px;">Pod</div>
<div class="clip" style="left:407px;top:546.5px;width:271px;height:24px">
<div class="t " style="left:12.5px;top:1.0px;font-size:16.00px;line-height:22px;color:#d2d2d7;letter-spacing:0.450px;">opentelemetry-demo-recommenda</div>
</div>
<div class="t " style="left:698.0px;top:535.6px;font-size:15.50px;line-height:21px;color:#d4d4d8;font-family:'DejaVu Sans Mono','Liberation Mono',monospace;letter-spacing:0.018px;">Receive ListRecommendations for product ids:[&#x27;L9ECAV7KIM&#x27;, &#x27;6</div>
<div class="b" style="left:698.0px;top:562.0px;width:357.0px;height:21.5px;background:#2d2d31;border-radius:4px;"></div>
<div class="t " style="left:703.0px;top:563.1px;font-size:15.50px;line-height:21px;color:#b4b4ba;font-family:'DejaVu Sans Mono','Liberation Mono',monospace;letter-spacing:0.018px;">otelServiceName=recommendationservice</div>
<div class="b" style="left:1060.5px;top:562.0px;width:230.0px;height:21.5px;background:#2d2d31;border-radius:4px;"></div>
<div class="t " style="left:1065.5px;top:563.1px;font-size:15.50px;line-height:21px;color:#b4b4ba;font-family:'DejaVu Sans Mono','Liberation Mono',monospace;letter-spacing:0.018px;">otelSpanID=b3f562a38e4c</div>
<div class="b" style="left:10.0px;top:589.0px;width:3.1px;height:50.0px;background:#79a8d2;border-radius:1px;"></div>
<div class="t " style="left:28.5px;top:590.6px;font-size:16.00px;line-height:22px;color:#8cb5de;letter-spacing:-0.305px;">INFO</div>
<div class="t " style="left:135.0px;top:590.2px;font-size:16.00px;line-height:22px;color:#d2d2d7;letter-spacing:0.298px;">06:05:07.964</div>
<div class="b" style="left:281.0px;top:594.8px;width:3.0px;height:38.5px;background:#aeaeb2;border-radius:1px;"></div>
<svg class="b" style="left:293.5px;top:607.0px" width="20" height="14" viewBox="0 0 20 14"><text x="9.600" y="7.200" text-anchor="middle" font-family="Liberation Sans, sans-serif" font-size="10.800" font-weight="400" fill="#b9b9bd" letter-spacing="-0.35" stroke="#b9b9bd" stroke-width="0.25">aws</text><path d="M1 9.300c4.800 3.300 11.500 3.300 16.800 0.300" stroke="#b9b9bd" stroke-width="1.300" fill="none" stroke-linecap="round"/><path d="M15.800 8.300l2.900-.1-1 2.600" stroke="#b9b9bd" stroke-width="1.100" fill="none" stroke-linecap="round" stroke-linejoin="round"/></svg>
<svg class="b" style="left:322.4px;top:603.9px" width="20" height="20" viewBox="0 0 20 20"><polygon points="10.00,1.80 16.72,5.04 18.38,12.31 13.73,18.15 6.27,18.15 1.62,12.31 3.28,5.04" fill="#b9b9bd" stroke="#b9b9bd" stroke-width="1.600" stroke-linejoin="round"/><g stroke="#17171a" stroke-width="0.850" fill="none" stroke-linecap="round"><circle cx="10" cy="10.400" r="4.000"/><path d="M10.00 9.20L10.00 4.30"/><path d="M10.94 9.65L14.77 6.60"/><path d="M11.17 10.67L15.95 11.76"/><path d="M10.52 11.48L12.65 15.90"/><path d="M9.48 11.48L7.35 15.90"/><path d="M8.83 10.67L4.05 11.76"/><path d="M9.06 9.65L5.23 6.60"/></g><circle cx="10" cy="10.400" r="1.100" fill="#17171a"/></svg>
<svg class="b" style="left:352.6px;top:605.8px" width="16.400" height="16.400" viewBox="0 0 16 16.200"><path d="M7.990.020C7.350.020 6.700.080 6.150.180 4.500.470 4.200 1.080 4.200 2.200V3.680H8.100V4.170H2.750C1.620 4.170.630 4.850.320 6.140-.040 7.620-.050 8.550.320 10.100.600 11.250 1.260 12.070 2.390 12.070H3.720V10.300C3.720 9.010 4.830 7.880 6.150 7.880H10.030C11.110 7.880 11.970 6.990 11.970 5.910V2.200C11.970 1.150 11.080.360 10.030.180 9.360.070 8.670.020 7.990.020Z" fill="#b9b9bd"/><path d="M7.990.020C7.350.020 6.700.080 6.150.180 4.500.470 4.200 1.080 4.200 2.200V3.680H8.100V4.170H2.750C1.620 4.170.630 4.850.320 6.140-.040 7.620-.050 8.550.320 10.100.600 11.250 1.260 12.070 2.390 12.070H3.720V10.300C3.720 9.010 4.830 7.880 6.150 7.880H10.030C11.110 7.880 11.970 6.990 11.970 5.910V2.200C11.970 1.150 11.080.360 10.030.180 9.360.070 8.670.020 7.990.020Z" fill="#b9b9bd" transform="rotate(180 8 8.050)"/><circle cx="6.050" cy="2.050" r=".78" fill="#17171a"/><circle cx="9.950" cy="14.050" r=".78" fill="#17171a"/></svg>
<div class="t " style="left:380.5px;top:603.0px;font-size:16.00px;line-height:22px;color:#7e7e84;letter-spacing:0.010px;">Pod</div>
<div class="clip" style="left:407px;top:602.0px;width:271px;height:24px">
<div class="t " style="left:12.5px;top:1.0px;font-size:16.00px;line-height:22px;color:#d2d2d7;letter-spacing:0.450px;">opentelemetry-demo-recommenda</div>
</div>
<div class="t " style="left:698.0px;top:591.1px;font-size:15.50px;line-height:21px;color:#d4d4d8;font-family:'DejaVu Sans Mono','Liberation Mono',monospace;letter-spacing:0.018px;">Receive ListRecommendations for product ids:[&#x27;L9ECAV7KIM&#x27;, &#x27;1</div>
<div class="b" style="left:698.0px;top:617.5px;width:357.0px;height:21.5px;background:#2d2d31;border-radius:4px;"></div>
<div class="t " style="left:703.0px;top:618.6px;font-size:15.50px;line-height:21px;color:#b4b4ba;font-family:'DejaVu Sans Mono','Liberation Mono',monospace;letter-spacing:0.018px;">otelServiceName=recommendationservice</div>
<div class="b" style="left:1060.5px;top:617.5px;width:230.0px;height:21.5px;background:#2d2d31;border-radius:4px;"></div>
<div class="t " style="left:1065.5px;top:618.6px;font-size:15.50px;line-height:21px;color:#b4b4ba;font-family:'DejaVu Sans Mono','Liberation Mono',monospace;letter-spacing:0.018px;">otelSpanID=671c1dc1c14c</div>
<div class="b" style="left:10.0px;top:645.0px;width:3.1px;height:50.0px;background:#79a8d2;border-radius:1px;"></div>
<div class="t " style="left:28.5px;top:646.6px;font-size:16.00px;line-height:22px;color:#8cb5de;letter-spacing:-0.305px;">INFO</div>
<div class="t " style="left:135.0px;top:646.2px;font-size:16.00px;line-height:22px;color:#d2d2d7;letter-spacing:0.381px;">06:05:05.824</div>
<div class="b" style="left:281.0px;top:650.8px;width:3.0px;height:38.5px;background:#aeaeb2;border-radius:1px;"></div>
<svg class="b" style="left:293.5px;top:663.0px" width="20" height="14" viewBox="0 0 20 14"><text x="9.600" y="7.200" text-anchor="middle" font-family="Liberation Sans, sans-serif" font-size="10.800" font-weight="400" fill="#b9b9bd" letter-spacing="-0.35" stroke="#b9b9bd" stroke-width="0.25">aws</text><path d="M1 9.300c4.800 3.300 11.500 3.300 16.800 0.300" stroke="#b9b9bd" stroke-width="1.300" fill="none" stroke-linecap="round"/><path d="M15.800 8.300l2.900-.1-1 2.600" stroke="#b9b9bd" stroke-width="1.100" fill="none" stroke-linecap="round" stroke-linejoin="round"/></svg>
<svg class="b" style="left:322.4px;top:659.9px" width="20" height="20" viewBox="0 0 20 20"><polygon points="10.00,1.80 16.72,5.04 18.38,12.31 13.73,18.15 6.27,18.15 1.62,12.31 3.28,5.04" fill="#b9b9bd" stroke="#b9b9bd" stroke-width="1.600" stroke-linejoin="round"/><g stroke="#17171a" stroke-width="0.850" fill="none" stroke-linecap="round"><circle cx="10" cy="10.400" r="4.000"/><path d="M10.00 9.20L10.00 4.30"/><path d="M10.94 9.65L14.77 6.60"/><path d="M11.17 10.67L15.95 11.76"/><path d="M10.52 11.48L12.65 15.90"/><path d="M9.48 11.48L7.35 15.90"/><path d="M8.83 10.67L4.05 11.76"/><path d="M9.06 9.65L5.23 6.60"/></g><circle cx="10" cy="10.400" r="1.100" fill="#17171a"/></svg>
<svg class="b" style="left:352.6px;top:661.8px" width="16.400" height="16.400" viewBox="0 0 16 16.200"><path d="M7.990.020C7.350.020 6.700.080 6.150.180 4.500.470 4.200 1.080 4.200 2.200V3.680H8.100V4.170H2.750C1.620 4.170.630 4.850.320 6.140-.040 7.620-.050 8.550.320 10.100.600 11.250 1.260 12.070 2.390 12.070H3.720V10.300C3.720 9.010 4.830 7.880 6.150 7.880H10.030C11.110 7.880 11.970 6.990 11.970 5.910V2.200C11.970 1.150 11.080.360 10.030.180 9.360.070 8.670.020 7.990.020Z" fill="#b9b9bd"/><path d="M7.990.020C7.350.020 6.700.080 6.150.180 4.500.470 4.200 1.080 4.200 2.200V3.680H8.100V4.170H2.750C1.620 4.170.630 4.850.320 6.140-.040 7.620-.050 8.550.320 10.100.600 11.250 1.260 12.070 2.390 12.070H3.720V10.300C3.720 9.010 4.830 7.880 6.150 7.880H10.030C11.110 7.880 11.970 6.990 11.970 5.910V2.200C11.970 1.150 11.080.360 10.030.180 9.360.070 8.670.020 7.990.020Z" fill="#b9b9bd" transform="rotate(180 8 8.050)"/><circle cx="6.050" cy="2.050" r=".78" fill="#17171a"/><circle cx="9.950" cy="14.050" r=".78" fill="#17171a"/></svg>
<div class="t " style="left:380.5px;top:659.0px;font-size:16.00px;line-height:22px;color:#7e7e84;letter-spacing:0.010px;">Pod</div>
<div class="clip" style="left:407px;top:658.0px;width:271px;height:24px">
<div class="t " style="left:12.5px;top:1.0px;font-size:16.00px;line-height:22px;color:#d2d2d7;letter-spacing:0.450px;">opentelemetry-demo-recommenda</div>
</div>
<div class="t " style="left:698.0px;top:647.1px;font-size:15.50px;line-height:21px;color:#d4d4d8;font-family:'DejaVu Sans Mono','Liberation Mono',monospace;letter-spacing:0.018px;">Receive ListRecommendations for product ids:[&#x27;0PUK6V6EV0&#x27;, &#x27;6</div>
<div class="b" style="left:698.0px;top:673.5px;width:357.0px;height:21.5px;background:#2d2d31;border-radius:4px;"></div>
<div class="t " style="left:703.0px;top:674.6px;font-size:15.50px;line-height:21px;color:#b4b4ba;font-family:'DejaVu Sans Mono','Liberation Mono',monospace;letter-spacing:0.018px;">otelServiceName=recommendationservice</div>
<div class="b" style="left:1060.5px;top:673.5px;width:230.0px;height:21.5px;background:#2d2d31;border-radius:4px;"></div>
<div class="t " style="left:1065.5px;top:674.6px;font-size:15.50px;line-height:21px;color:#b4b4ba;font-family:'DejaVu Sans Mono','Liberation Mono',monospace;letter-spacing:0.018px;">otelSpanID=753d585e7a4c</div>
<div class="b" style="left:10.0px;top:701.0px;width:3.1px;height:50.0px;background:#79a8d2;border-radius:1px;"></div>
<div class="t " style="left:28.5px;top:702.6px;font-size:16.00px;line-height:22px;color:#8cb5de;letter-spacing:-0.305px;">INFO</div>
<div class="t " style="left:135.0px;top:702.2px;font-size:16.00px;line-height:22px;color:#d2d2d7;letter-spacing:0.381px;">06:05:05.639</div>
<div class="b" style="left:281.0px;top:706.8px;width:3.0px;height:38.5px;background:#aeaeb2;border-radius:1px;"></div>
<svg class="b" style="left:293.5px;top:719.0px" width="20" height="14" viewBox="0 0 20 14"><text x="9.600" y="7.200" text-anchor="middle" font-family="Liberation Sans, sans-serif" font-size="10.800" font-weight="400" fill="#b9b9bd" letter-spacing="-0.35" stroke="#b9b9bd" stroke-width="0.25">aws</text><path d="M1 9.300c4.800 3.300 11.500 3.300 16.800 0.300" stroke="#b9b9bd" stroke-width="1.300" fill="none" stroke-linecap="round"/><path d="M15.800 8.300l2.900-.1-1 2.600" stroke="#b9b9bd" stroke-width="1.100" fill="none" stroke-linecap="round" stroke-linejoin="round"/></svg>
<svg class="b" style="left:322.4px;top:715.9px" width="20" height="20" viewBox="0 0 20 20"><polygon points="10.00,1.80 16.72,5.04 18.38,12.31 13.73,18.15 6.27,18.15 1.62,12.31 3.28,5.04" fill="#b9b9bd" stroke="#b9b9bd" stroke-width="1.600" stroke-linejoin="round"/><g stroke="#17171a" stroke-width="0.850" fill="none" stroke-linecap="round"><circle cx="10" cy="10.400" r="4.000"/><path d="M10.00 9.20L10.00 4.30"/><path d="M10.94 9.65L14.77 6.60"/><path d="M11.17 10.67L15.95 11.76"/><path d="M10.52 11.48L12.65 15.90"/><path d="M9.48 11.48L7.35 15.90"/><path d="M8.83 10.67L4.05 11.76"/><path d="M9.06 9.65L5.23 6.60"/></g><circle cx="10" cy="10.400" r="1.100" fill="#17171a"/></svg>
<svg class="b" style="left:352.6px;top:717.8px" width="16.400" height="16.400" viewBox="0 0 16 16.200"><path d="M7.990.020C7.350.020 6.700.080 6.150.180 4.500.470 4.200 1.080 4.200 2.200V3.680H8.100V4.170H2.750C1.620 4.170.630 4.850.320 6.140-.040 7.620-.050 8.550.320 10.100.600 11.250 1.260 12.070 2.390 12.070H3.720V10.300C3.720 9.010 4.830 7.880 6.150 7.880H10.030C11.110 7.880 11.970 6.990 11.970 5.910V2.200C11.970 1.150 11.080.360 10.030.180 9.360.070 8.670.020 7.990.020Z" fill="#b9b9bd"/><path d="M7.990.020C7.350.020 6.700.080 6.150.180 4.500.470 4.200 1.080 4.200 2.200V3.680H8.100V4.170H2.750C1.620 4.170.630 4.850.320 6.140-.040 7.620-.050 8.550.320 10.100.600 11.250 1.260 12.070 2.390 12.070H3.720V10.300C3.720 9.010 4.830 7.880 6.150 7.880H10.030C11.110 7.880 11.970 6.990 11.970 5.910V2.200C11.970 1.150 11.080.360 10.030.180 9.360.070 8.670.020 7.990.020Z" fill="#b9b9bd" transform="rotate(180 8 8.050)"/><circle cx="6.050" cy="2.050" r=".78" fill="#17171a"/><circle cx="9.950" cy="14.050" r=".78" fill="#17171a"/></svg>
<div class="t " style="left:380.5px;top:715.0px;font-size:16.00px;line-height:22px;color:#7e7e84;letter-spacing:0.010px;">Pod</div>
<div class="clip" style="left:407px;top:714.0px;width:271px;height:24px">
<div class="t " style="left:12.5px;top:1.0px;font-size:16.00px;line-height:22px;color:#d2d2d7;letter-spacing:0.450px;">opentelemetry-demo-recommenda</div>
</div>
<div class="t " style="left:698.0px;top:703.1px;font-size:15.50px;line-height:21px;color:#d4d4d8;font-family:'DejaVu Sans Mono','Liberation Mono',monospace;letter-spacing:0.018px;">Receive ListRecommendations for product ids:[&#x27;LS4PSXUNUM&#x27;, &#x27;1</div>
<div class="b" style="left:698.0px;top:729.5px;width:357.0px;height:21.5px;background:#2d2d31;border-radius:4px;"></div>
<div class="t " style="left:703.0px;top:730.6px;font-size:15.50px;line-height:21px;color:#b4b4ba;font-family:'DejaVu Sans Mono','Liberation Mono',monospace;letter-spacing:0.018px;">otelServiceName=recommendationservice</div>
<div class="b" style="left:1060.5px;top:729.5px;width:230.0px;height:21.5px;background:#2d2d31;border-radius:4px;"></div>
<div class="t " style="left:1065.5px;top:730.6px;font-size:15.50px;line-height:21px;color:#b4b4ba;font-family:'DejaVu Sans Mono','Liberation Mono',monospace;letter-spacing:0.018px;">otelSpanID=1f3b2c9d0e4c</div>
</div>
<div class="b" style="left:73.0px;top:357.0px;width:1263.0px;height:40.5px;background:#1e1e21;border-top:1px solid #242428;border-bottom:1px solid #2a2a2e;"></div>
<div class="t " style="left:104.0px;top:366.5px;font-size:16.00px;line-height:22px;color:#b6b6bc;letter-spacing:0.275px;">Severity</div>
<div class="t " style="left:208.0px;top:366.5px;font-size:16.00px;line-height:22px;color:#b6b6bc;letter-spacing:0.510px;">Time</div>
<svg class="b" style="left:251.8px;top:369.2px" width="16.5" height="16.5" viewBox="0 0 24 24" stroke="#b6b6bc" stroke-width="2" stroke-linecap="round" stroke-linejoin="round" fill="none"><path d="M12 5v14"/><path d="m19 12-7 7-7-7"/></svg>
<div class="t " style="left:354.0px;top:366.5px;font-size:16.00px;line-height:22px;color:#b6b6bc;letter-spacing:0.065px;">Resource</div>
<div class="t " style="left:771.0px;top:366.5px;font-size:16.00px;line-height:22px;color:#b6b6bc;letter-spacing:0.133px;">Body</div>
<div class="b" style="left:853.0px;top:367.5px;width:20.0px;height:20.0px;border:1px solid #45454b;border-radius:4px;"></div>
<svg class="b" style="left:856.5px;top:371.0px" width="13" height="13" viewBox="0 0 24 24" stroke="#8a8a90" stroke-width="2" stroke-linecap="round" stroke-linejoin="round" fill="none"><path d="M20 6 9 17l-5-5"/></svg>
<div class="t " style="left:884.5px;top:366.5px;font-size:16.00px;line-height:22px;color:#b6b6bc;letter-spacing:0.391px;">Attributes</div>
<div class="b" style="left:1336.0px;top:63.5px;width:664.0px;height:1062.0px;background:#1f1f22;border-left:1px solid #2c2c30;"></div>
<svg class="b" style="left:1357.0px;top:79.1px" width="21" height="21" viewBox="0 0 24 24" stroke="#e4e4e7" stroke-width="1.9" stroke-linecap="round" stroke-linejoin="round" fill="none"><path d="M4 22h14a2 2 0 0 0 2-2V7l-5-5H6a2 2 0 0 0-2 2v4"/><path d="M14 2v4a2 2 0 0 0 2 2h4"/><path d="m5 12-3 3 3 3"/><path d="m9 18 3-3-3-3"/></svg>
<div class="t " style="left:1389.0px;top:79.0px;font-size:16.00px;line-height:22px;color:#6f6f76;letter-spacing:0.451px;">Log record</div>
<svg class="b" style="left:1947.0px;top:83.9px" width="23" height="23" viewBox="0 0 24 24" stroke="#e4e4e7" stroke-width="2" stroke-linecap="round" stroke-linejoin="round" fill="none"><path d="M18 6 6 18"/><path d="m6 6 12 12"/></svg>
<div class="t " style="left:1389.0px;top:117.0px;font-size:20.50px;line-height:28px;color:#fafafa;letter-spacing:0.661px;-webkit-text-stroke:0.6px #fafafa;">06:05:12.356026958</div>
<div class="b" style="left:1931.5px;top:122.0px;width:47.5px;height:20.7px;background:#8cbce8;border-radius:4.5px;"></div>
<div class="t " style="left:1936.5px;top:122.2px;font-size:16.00px;line-height:22px;color:#1c2836;letter-spacing:-0.180px;">INFO</div>
<div class="t " style="left:1358.0px;top:180.5px;font-size:17.00px;line-height:23px;color:#fafafa;letter-spacing:0.707px;-webkit-text-stroke:0.2px #fafafa;">Overview</div>
<div class="b" style="left:1358.0px;top:216.0px;width:76.5px;height:2.6px;background:#7557e8;"></div>
<div class="b" style="left:1337.0px;top:218.6px;width:663.0px;height:1.0px;background:#2c2c30;"></div>
<div class="t " style="left:1456.0px;top:180.5px;font-size:17.00px;line-height:23px;color:#6f6f76;letter-spacing:0.669px;">Attributes</div>
<div class="b" style="left:1540.0px;top:180.5px;width:26.0px;height:23.5px;background:#3c3c40;border-radius:12px;"></div>
<div class="t " style="left:1548.0px;top:180.8px;font-size:16.50px;line-height:23px;color:#b4b4b9;-webkit-text-stroke:0.5px #b4b4b9;">0</div>
<div class="t " style="left:1587.0px;top:180.5px;font-size:17.00px;line-height:23px;color:#6f6f76;letter-spacing:0.405px;">Resource</div>
<div class="t " style="left:1684.0px;top:180.5px;font-size:17.00px;line-height:23px;color:#6f6f76;letter-spacing:0.523px;">Source</div>
<div class="b" style="left:1358.0px;top:241.0px;width:621.0px;height:53.5px;background:#19191b;border:1px solid #3d3d41;border-radius:8px;"></div>
<svg class="b" style="left:1370.0px;top:257.5px" width="20" height="20" viewBox="0 0 24 24" stroke="#9a9aa0" stroke-width="1.9" stroke-linecap="round" stroke-linejoin="round" fill="none"><circle cx="11" cy="11" r="8"/><path d="m21 21-4.300-4.300"/></svg>
<svg class="b" style="left:1945.0px;top:260.0px" width="15" height="15" viewBox="0 0 24 24" stroke="#8a8a90" stroke-width="1.9" stroke-linecap="round" stroke-linejoin="round" fill="none"><path d="M18 6 6 18"/><path d="m6 6 12 12"/></svg>
<div class="b" style="left:1358.0px;top:315.5px;width:621.0px;height:87.0px;background:#27272a;border-radius:7px;"></div>
<div class="b" style="left:1358.0px;top:315.5px;width:621.0px;height:43.0px;background:#313134;border-radius:7px 7px 0 0;"></div>
<div class="t " style="left:1379.0px;top:324.5px;font-size:17.50px;line-height:24px;color:#fafafa;letter-spacing:0.278px;-webkit-text-stroke:0.22px #fafafa;">Body</div>
<div class="b" style="left:1797.0px;top:326.5px;width:52.0px;height:20.5px;background:#1b526f;border-radius:4.5px;"></div>
<div class="t " style="left:1802.0px;top:325.5px;font-size:16.00px;line-height:22px;color:#5ec2f3;letter-spacing:0.479px;">string</div>
<svg class="b" style="left:1860.2px;top:326.4px" width="19.6" height="19.6" viewBox="0 0 24 24" stroke="#c8c8cc" stroke-width="1.8" stroke-linecap="round" stroke-linejoin="round" fill="none"><rect width="14" height="14" x="8" y="8" rx="2" ry="2"/><path d="M4 16c-1.100 0-2-.9-2-2V4c0-1.100.9-2 2-2h10c1.100 0 2 .9 2 2"/></svg>
<svg class="b" style="left:1898px;top:329px" width="20" height="17" viewBox="0 0 20 17" fill="none" stroke="#c8c8cc" stroke-width="1.500" stroke-linecap="round" stroke-linejoin="round"><path d="M1.300 1.800H10.400M1.300 1.800L6.900 8.700V13L10.300 14.800V8.300"/><path d="M10.900 4.200h6.200M14 1.100v6.200" stroke-width="1.300"/></svg>
<svg class="b" style="left:1934.5px;top:329px" width="20" height="17" viewBox="0 0 20 17" fill="none" stroke="#c8c8cc" stroke-width="1.500" stroke-linecap="round" stroke-linejoin="round"><path d="M1.300 1.800H10.400M1.300 1.800L6.900 8.700V13L10.300 14.800V8.300"/><path d="M10.900 3.800h6.400" stroke-width="1.300"/></svg>
<div class="t " style="left:1379.0px;top:370.7px;font-size:15.50px;line-height:21px;color:#ececef;font-family:'DejaVu Sans Mono','Liberation Mono',monospace;letter-spacing:0.018px;">Targeted ad request received for [assembly]</div>
<div class="b" style="left:1358.0px;top:423.0px;width:621.0px;height:86.7px;background:#27272a;border-radius:7px;"></div>
<div class="b" style="left:1358.0px;top:423.0px;width:621.0px;height:43.3px;background:#313134;border-radius:7px 7px 0 0;"></div>
<div class="t " style="left:1379.0px;top:432.1px;font-size:17.50px;line-height:24px;color:#fafafa;letter-spacing:0.463px;-webkit-text-stroke:0.22px #fafafa;">Log Attributes</div>
<div class="t " style="left:1379.0px;top:477.6px;font-size:16.00px;line-height:22px;color:#67676e;font-style:italic;letter-spacing:0.368px;">No attributes found.</div>
<div class="b" style="left:1358.0px;top:531.0px;width:621.0px;height:370.5px;background:#27272a;border-radius:7px;"></div>
<div class="b" style="left:1358.0px;top:531.0px;width:621.0px;height:43.0px;background:#313134;border-radius:7px 7px 0 0;"></div>
<div class="t " style="left:1379.0px;top:540.0px;font-size:17.50px;line-height:24px;color:#fafafa;letter-spacing:0.288px;-webkit-text-stroke:0.22px #fafafa;">Span Context</div>
<svg class="b" style="left:1379.5px;top:588.0px" width="19" height="19" viewBox="0 0 24 24" stroke="#e4e4e7" stroke-width="2.2" stroke-linecap="round" stroke-linejoin="round" fill="none"><rect x="4" y="3.500" width="5" height="5" rx="1.300"/><path d="M6.500 8.500v5.500a3 3 0 0 0 3 3h5.500"/><rect x="15" y="14.500" width="5" height="5" rx="1.300"/></svg>
<div class="t " style="left:1415.0px;top:585.5px;font-size:16.80px;line-height:23px;color:#f4f4f5;font-family:'DejaVu Sans Mono','Liberation Mono',monospace;letter-spacing:0.037px;text-decoration:underline;text-underline-offset:3px;text-decoration-thickness:1.5px;">#4d4c9206b43bc3e6cdb5da6952523e57</div>
<div class="b" style="left:1498.0px;top:675.0px;width:1.0px;height:178.0px;background:#2b2b2e;"></div>
<div class="b" style="left:1612.5px;top:675.0px;width:1.0px;height:178.0px;background:#2b2b2e;"></div>
<div class="b" style="left:1726.0px;top:675.0px;width:1.0px;height:178.0px;background:#2b2b2e;"></div>
<div class="b" style="left:1840.5px;top:675.0px;width:1.0px;height:178.0px;background:#2b2b2e;"></div>
<div class="t " style="left:1492.7px;top:629.5px;font-size:16.00px;line-height:22px;color:#c2c2c7;letter-spacing:0.323px;">06:05:12.355</div>
<div class="t " style="left:1486.5px;top:654.0px;font-size:13.50px;line-height:18px;color:#66666d;letter-spacing:0.332px;">1ms</div>
<div class="t " style="left:1598.5px;top:654.0px;font-size:13.50px;line-height:18px;color:#66666d;letter-spacing:0.332px;">2ms</div>
<div class="t " style="left:1712.8px;top:654.0px;font-size:13.50px;line-height:18px;color:#66666d;letter-spacing:0.332px;">3ms</div>
<div class="t " style="left:1826.7px;top:654.0px;font-size:13.50px;line-height:18px;color:#66666d;letter-spacing:0.332px;">4ms</div>
<svg class="b" style="left:1383px;top:673px" width="572" height="27"><rect x="1" y="0.8" width="569.5" height="24.2" rx="5" fill="none" stroke="#56565b" stroke-width="1" stroke-dasharray="5 4"/></svg>
<div class="t " style="left:1389.0px;top:676.5px;font-size:14.50px;line-height:20px;color:#c2c2c7;letter-spacing:-0.092px;">1 Span, 1 Resource</div>
<div class="b" style="left:1382.5px;top:702.0px;width:561.5px;height:25.7px;background:#125e68;border:2px solid #e5343a;border-radius:4px;"></div>
<div class="t " style="left:1389.0px;top:705.7px;font-size:14.25px;line-height:19px;color:#f4f4f5;font-family:'DejaVu Sans Mono','Liberation Mono',monospace;letter-spacing:0.001px;">grpc.oteldemo.AdService/GetAds</div>
<div class="b" style="left:1480.5px;top:742.6px;width:444.8px;height:36.9px;border:3px solid #fafafa;border-radius:7px;"></div>
<div class="b" style="left:1486.0px;top:749.0px;width:435.6px;height:25.0px;background:#683a73;border:2px solid #e5343a;border-radius:3px;"></div>
<div class="t " style="left:1492.7px;top:752.3px;font-size:14.25px;line-height:19px;color:#f4f4f5;font-family:'DejaVu Sans Mono','Liberation Mono',monospace;letter-spacing:0.001px;">oteldemo.AdService GetAds</div>
<div class="b" style="left:1485.5px;top:728.5px;width:72.5px;height:26.0px;background:#683a73;border:2px solid #e0394a;border-radius:6.5px;"></div>
<svg class="b" style="left:1488px;top:731px" width="68" height="22" viewBox="0 0 68 22"><path d="M8.900 3.300l7.200 7.200-7.200 7.200-7.200-7.200z" fill="#7aa8da" stroke="#2b2340" stroke-width="1"/><path d="M16.900 3.300l7.200 7.200-7.200 7.200-7.200-7.200z" fill="#c5d5ee" stroke="#2b2340" stroke-width="1"/><path d="M39.200 4.200h14.600L46.500 17.600z" fill="#b2b2b6" stroke="#26262a" stroke-width="1.100" stroke-linejoin="round"/></svg>
<div class="t " style="left:1513.3px;top:732.8px;font-size:14.50px;line-height:20px;color:#bfa9c6;">3</div>
<div class="t " style="left:1542.7px;top:732.8px;font-size:14.50px;line-height:20px;color:#bfa9c6;">1</div>
<div class="b" style="left:1897.0px;top:728.5px;width:64.5px;height:26.0px;background:#683a73;border:2px solid #e0394a;border-radius:6.5px;"></div>
<svg class="b" style="left:1899px;top:731px" width="62" height="22" viewBox="0 0 62 22"><path d="M10.400 3.300l7.200 7.200-7.200 7.200-7.200-7.200z" fill="#fde047" stroke="#3a2a1e" stroke-width="1"/><path d="M32.400 4.200h14.600L39.700 17.600z" fill="#ee2b2b" stroke="#3a1a1e" stroke-width="1.100" stroke-linejoin="round"/></svg>
<div class="t " style="left:1917.3px;top:732.8px;font-size:14.50px;line-height:20px;color:#bfa9c6;">2</div>
<div class="t " style="left:1946.8px;top:732.8px;font-size:14.50px;line-height:20px;color:#bfa9c6;">1</div>
<div class="b" style="left:1486.4px;top:630.0px;width:1.4px;height:143.0px;background:#9e9ea3;"></div>
<div class="clip" style="left:1502.7px;top:789px;width:403px;height:23.5px;background:#683a73;border-radius:3px">
<div class="t " style="left:8.6px;top:2.9px;font-size:14.25px;line-height:19px;color:#f4f4f5;font-family:'DejaVu Sans Mono','Liberation Mono',monospace;letter-spacing:0.001px;">oteldemo.FeatureFlagService/EvaluateProbability</div>
</div>
<div class="clip" style="left:1718px;top:818px;width:128.2px;height:23.5px;">
<svg class="b" style="left:0;top:0" width="160" height="25"><rect x="0.500" y="0.500" width="150" height="22.8" rx="5" fill="none" stroke="#56565b" stroke-width="1" stroke-dasharray="5 4"/></svg>
<div class="t " style="left:6.0px;top:1.8px;font-size:14.50px;line-height:20px;color:#c2c2c7;letter-spacing:-0.127px;">2 Spans, 1 Resource</div>
</div>
<div class="b" style="left:1379.0px;top:853.5px;width:579.0px;height:1.0px;background:#2b2b2e;"></div>
<div class="t " style="left:1379.2px;top:866.5px;font-size:17.00px;line-height:23px;color:#66666d;letter-spacing:0.499px;">This span&#x27;s duration:</div>
<div class="t " style="left:1551.8px;top:866.5px;font-size:17.00px;line-height:23px;color:#cfcfd4;letter-spacing:0.428px;">3.792ms</div>
<div class="t " style="left:1626.5px;top:866.5px;font-size:17.00px;line-height:23px;color:#66666d;">(</div>
<div class="t " style="left:1636.5px;top:866.5px;font-size:17.00px;line-height:23px;color:#cfcfd4;letter-spacing:0.325px;">76%</div>
<div class="t " style="left:1678.6px;top:866.5px;font-size:17.00px;line-height:23px;color:#66666d;letter-spacing:0.526px;">of trace</div>
<div class="t " style="left:1746.0px;top:866.5px;font-size:17.00px;line-height:23px;color:#cfcfd4;letter-spacing:0.542px;">4.99ms</div>
<div class="t " style="left:1811.4px;top:866.5px;font-size:17.00px;line-height:23px;color:#66666d;">)</div>
<div class="b" style="left:1358.0px;top:923.0px;width:621.0px;height:217.0px;background:#27272a;border-radius:7px;"></div>
<div class="b" style="left:1358.0px;top:923.0px;width:621.0px;height:41.7px;background:#313134;border-radius:7px 7px 0 0;"></div>
<div class="t " style="left:1379.0px;top:931.4px;font-size:17.50px;line-height:24px;color:#fafafa;letter-spacing:0.138px;-webkit-text-stroke:0.22px #fafafa;">Resource</div>
<div class="t " style="left:1379.0px;top:983.5px;font-size:16.00px;line-height:22px;color:#66666d;letter-spacing:-0.156px;">Pod</div>
<div class="t " style="left:1418.0px;top:982.5px;font-size:17.00px;line-height:23px;color:#f1f1f3;letter-spacing:0.970px;text-decoration:underline;text-underline-offset:3px;text-decoration-thickness:1.5px;">opentelemetry-demo-adservice-b4466455b-t8k7p</div>
<div class="b" style="left:1917.0px;top:985.5px;width:41.0px;height:20.7px;background:#38383d;border-radius:4px;"></div>
<div class="t " style="left:1922.0px;top:984.8px;font-size:15.00px;line-height:21px;color:#a8a8ae;letter-spacing:-0.223px;">RPC</div>
<div class="b" style="left:1358.0px;top:1028.0px;width:621.0px;height:1.0px;background:#2f2f33;"></div>
<div class="b" style="left:1378.5px;top:1045.0px;width:186.5px;height:90.0px;background:#3a3a3f;border-radius:10px;"></div>
<div class="t " style="left:1399.7px;top:1060.8px;font-size:16.00px;line-height:22px;color:#e2e2e6;letter-spacing:0.132px;">Request total</div>
<div class="t " style="left:1399.7px;top:1081.9px;font-size:27.00px;line-height:37px;color:#fafafa;font-weight:700;letter-spacing:-1.266px;">91</div>
<div class="b" style="left:1403.5px;top:1122.0px;width:58.0px;height:8.0px;background:#4a4a50;border-radius:4px;"></div>
<div class="b" style="left:1575.7px;top:1045.0px;width:186.0px;height:90.0px;background:#3a3a3f;border-radius:10px;"></div>
<div class="t " style="left:1596.9px;top:1060.8px;font-size:16.00px;line-height:22px;color:#e2e2e6;letter-spacing:0.277px;">Error percentage</div>
<div class="t " style="left:1596.9px;top:1081.9px;font-size:27.00px;line-height:37px;color:#fafafa;font-weight:700;letter-spacing:1.071px;">36.26%</div>
<div class="b" style="left:1600.7px;top:1122.0px;width:58.0px;height:8.0px;background:#4a4a50;border-radius:4px;"></div>
<div class="b" style="left:1772.0px;top:1045.0px;width:186.0px;height:90.0px;background:#3a3a3f;border-radius:10px;"></div>
<div class="t " style="left:1793.2px;top:1060.8px;font-size:16.00px;line-height:22px;color:#e2e2e6;letter-spacing:0.204px;">Duration average</div>
<div class="t " style="left:1793.2px;top:1081.9px;font-size:27.00px;line-height:37px;color:#fafafa;font-weight:700;letter-spacing:1.112px;">4.99</div>
<div class="b" style="left:1797.0px;top:1122.0px;width:58.0px;height:8.0px;background:#4a4a50;border-radius:4px;"></div>
<div class="t " style="left:1856.2px;top:1092.2px;font-size:16.00px;line-height:22px;color:#fafafa;font-weight:700;letter-spacing:-0.562px;">ms</div>
</div></body></html>
